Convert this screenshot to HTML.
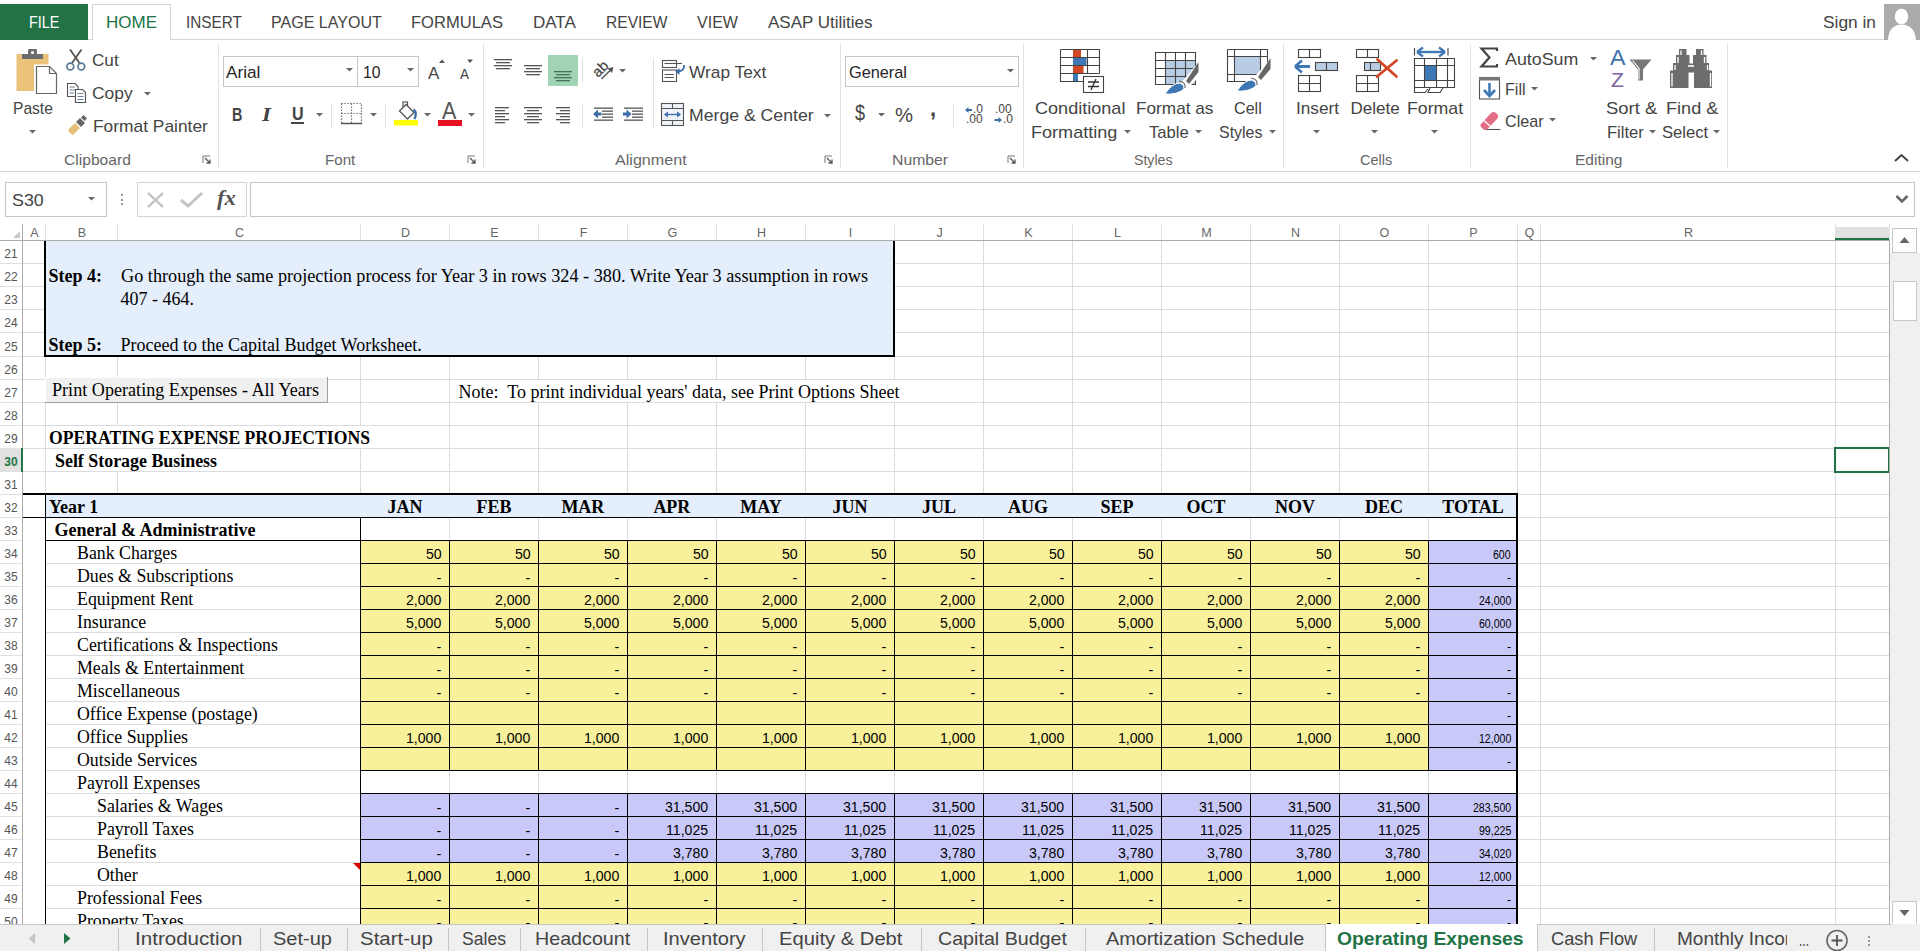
<!DOCTYPE html>
<html><head><meta charset="utf-8"><title>Excel</title>
<style>
html,body{margin:0;padding:0;width:1920px;height:951px;overflow:hidden;background:#fff;}
body{position:relative;font-family:"Liberation Sans",sans-serif;}
body>div{position:absolute;}
.t{white-space:pre;line-height:1;}
</style></head><body>
<div style="left:23px;top:263px;width:1866px;height:1px;background:#DADCDD;"></div>
<div style="left:23px;top:286px;width:1866px;height:1px;background:#DADCDD;"></div>
<div style="left:23px;top:309px;width:1866px;height:1px;background:#DADCDD;"></div>
<div style="left:23px;top:332px;width:1866px;height:1px;background:#DADCDD;"></div>
<div style="left:23px;top:356px;width:1866px;height:1px;background:#DADCDD;"></div>
<div style="left:23px;top:379px;width:1866px;height:1px;background:#DADCDD;"></div>
<div style="left:23px;top:402px;width:1866px;height:1px;background:#DADCDD;"></div>
<div style="left:23px;top:425px;width:1866px;height:1px;background:#DADCDD;"></div>
<div style="left:23px;top:448px;width:1866px;height:1px;background:#DADCDD;"></div>
<div style="left:23px;top:471px;width:1866px;height:1px;background:#DADCDD;"></div>
<div style="left:23px;top:494px;width:1866px;height:1px;background:#DADCDD;"></div>
<div style="left:23px;top:517px;width:1866px;height:1px;background:#DADCDD;"></div>
<div style="left:23px;top:540px;width:1866px;height:1px;background:#DADCDD;"></div>
<div style="left:23px;top:563px;width:1866px;height:1px;background:#DADCDD;"></div>
<div style="left:23px;top:586px;width:1866px;height:1px;background:#DADCDD;"></div>
<div style="left:23px;top:609px;width:1866px;height:1px;background:#DADCDD;"></div>
<div style="left:23px;top:632px;width:1866px;height:1px;background:#DADCDD;"></div>
<div style="left:23px;top:655px;width:1866px;height:1px;background:#DADCDD;"></div>
<div style="left:23px;top:678px;width:1866px;height:1px;background:#DADCDD;"></div>
<div style="left:23px;top:701px;width:1866px;height:1px;background:#DADCDD;"></div>
<div style="left:23px;top:724px;width:1866px;height:1px;background:#DADCDD;"></div>
<div style="left:23px;top:747px;width:1866px;height:1px;background:#DADCDD;"></div>
<div style="left:23px;top:770px;width:1866px;height:1px;background:#DADCDD;"></div>
<div style="left:23px;top:793px;width:1866px;height:1px;background:#DADCDD;"></div>
<div style="left:23px;top:816px;width:1866px;height:1px;background:#DADCDD;"></div>
<div style="left:23px;top:839px;width:1866px;height:1px;background:#DADCDD;"></div>
<div style="left:23px;top:862px;width:1866px;height:1px;background:#DADCDD;"></div>
<div style="left:23px;top:885px;width:1866px;height:1px;background:#DADCDD;"></div>
<div style="left:23px;top:908px;width:1866px;height:1px;background:#DADCDD;"></div>
<div style="left:117px;top:241px;width:1px;height:683px;background:#DADCDD;"></div>
<div style="left:360px;top:241px;width:1px;height:683px;background:#DADCDD;"></div>
<div style="left:449px;top:241px;width:1px;height:683px;background:#DADCDD;"></div>
<div style="left:538px;top:241px;width:1px;height:683px;background:#DADCDD;"></div>
<div style="left:627px;top:241px;width:1px;height:683px;background:#DADCDD;"></div>
<div style="left:716px;top:241px;width:1px;height:683px;background:#DADCDD;"></div>
<div style="left:805px;top:241px;width:1px;height:683px;background:#DADCDD;"></div>
<div style="left:894px;top:241px;width:1px;height:683px;background:#DADCDD;"></div>
<div style="left:983px;top:241px;width:1px;height:683px;background:#DADCDD;"></div>
<div style="left:1072px;top:241px;width:1px;height:683px;background:#DADCDD;"></div>
<div style="left:1161px;top:241px;width:1px;height:683px;background:#DADCDD;"></div>
<div style="left:1250px;top:241px;width:1px;height:683px;background:#DADCDD;"></div>
<div style="left:1339px;top:241px;width:1px;height:683px;background:#DADCDD;"></div>
<div style="left:1428px;top:241px;width:1px;height:683px;background:#DADCDD;"></div>
<div style="left:1517px;top:241px;width:1px;height:683px;background:#DADCDD;"></div>
<div style="left:1540px;top:241px;width:1px;height:683px;background:#DADCDD;"></div>
<div style="left:1835px;top:241px;width:1px;height:683px;background:#DADCDD;"></div>
<div style="left:0px;top:263px;width:22px;height:1px;background:#E1E1E1;"></div>
<div style="left:0px;top:286px;width:22px;height:1px;background:#E1E1E1;"></div>
<div style="left:0px;top:309px;width:22px;height:1px;background:#E1E1E1;"></div>
<div style="left:0px;top:332px;width:22px;height:1px;background:#E1E1E1;"></div>
<div style="left:0px;top:356px;width:22px;height:1px;background:#E1E1E1;"></div>
<div style="left:0px;top:379px;width:22px;height:1px;background:#E1E1E1;"></div>
<div style="left:0px;top:402px;width:22px;height:1px;background:#E1E1E1;"></div>
<div style="left:0px;top:425px;width:22px;height:1px;background:#E1E1E1;"></div>
<div style="left:0px;top:448px;width:22px;height:1px;background:#E1E1E1;"></div>
<div style="left:0px;top:471px;width:22px;height:1px;background:#E1E1E1;"></div>
<div style="left:0px;top:494px;width:22px;height:1px;background:#E1E1E1;"></div>
<div style="left:0px;top:517px;width:22px;height:1px;background:#E1E1E1;"></div>
<div style="left:0px;top:540px;width:22px;height:1px;background:#E1E1E1;"></div>
<div style="left:0px;top:563px;width:22px;height:1px;background:#E1E1E1;"></div>
<div style="left:0px;top:586px;width:22px;height:1px;background:#E1E1E1;"></div>
<div style="left:0px;top:609px;width:22px;height:1px;background:#E1E1E1;"></div>
<div style="left:0px;top:632px;width:22px;height:1px;background:#E1E1E1;"></div>
<div style="left:0px;top:655px;width:22px;height:1px;background:#E1E1E1;"></div>
<div style="left:0px;top:678px;width:22px;height:1px;background:#E1E1E1;"></div>
<div style="left:0px;top:701px;width:22px;height:1px;background:#E1E1E1;"></div>
<div style="left:0px;top:724px;width:22px;height:1px;background:#E1E1E1;"></div>
<div style="left:0px;top:747px;width:22px;height:1px;background:#E1E1E1;"></div>
<div style="left:0px;top:770px;width:22px;height:1px;background:#E1E1E1;"></div>
<div style="left:0px;top:793px;width:22px;height:1px;background:#E1E1E1;"></div>
<div style="left:0px;top:816px;width:22px;height:1px;background:#E1E1E1;"></div>
<div style="left:0px;top:839px;width:22px;height:1px;background:#E1E1E1;"></div>
<div style="left:0px;top:862px;width:22px;height:1px;background:#E1E1E1;"></div>
<div style="left:0px;top:885px;width:22px;height:1px;background:#E1E1E1;"></div>
<div style="left:0px;top:908px;width:22px;height:1px;background:#E1E1E1;"></div>
<div style="left:46px;top:241px;width:847px;height:114px;background:#E5EEFB;"></div>
<div style="left:44px;top:241px;width:2px;height:116px;background:#000;"></div>
<div style="left:893px;top:241px;width:2px;height:116px;background:#000;"></div>
<div style="left:44px;top:355px;width:851px;height:2px;background:#000;"></div>
<div style="left:450px;top:380px;width:445px;height:22px;background:#fff;"></div>
<div style="left:46px;top:426px;width:330px;height:22px;background:#fff;"></div>
<div style="left:46px;top:449px;width:180px;height:22px;background:#fff;"></div>
<div style="left:23px;top:493px;width:1495px;height:2px;background:#000;"></div>
<div style="left:46px;top:495px;width:1470px;height:22px;background:#E5EEFB;"></div>
<div style="left:23px;top:517px;width:1495px;height:1px;background:#000;"></div>
<div style="left:45px;top:495px;width:1px;height:429px;background:#000;"></div>
<div style="left:1516px;top:493px;width:2px;height:431px;background:#000;"></div>
<div style="left:23px;top:518px;width:22px;height:406px;background:#fff;"></div>
<div style="left:46px;top:518px;width:314px;height:406px;background:#fff;"></div>
<div style="left:46px;top:540px;width:314px;height:1px;background:#DADCDD;"></div>
<div style="left:46px;top:563px;width:314px;height:1px;background:#DADCDD;"></div>
<div style="left:46px;top:586px;width:314px;height:1px;background:#DADCDD;"></div>
<div style="left:46px;top:609px;width:314px;height:1px;background:#DADCDD;"></div>
<div style="left:46px;top:632px;width:314px;height:1px;background:#DADCDD;"></div>
<div style="left:46px;top:655px;width:314px;height:1px;background:#DADCDD;"></div>
<div style="left:46px;top:678px;width:314px;height:1px;background:#DADCDD;"></div>
<div style="left:46px;top:701px;width:314px;height:1px;background:#DADCDD;"></div>
<div style="left:46px;top:724px;width:314px;height:1px;background:#DADCDD;"></div>
<div style="left:46px;top:747px;width:314px;height:1px;background:#DADCDD;"></div>
<div style="left:46px;top:770px;width:314px;height:1px;background:#DADCDD;"></div>
<div style="left:46px;top:793px;width:314px;height:1px;background:#DADCDD;"></div>
<div style="left:46px;top:816px;width:314px;height:1px;background:#DADCDD;"></div>
<div style="left:46px;top:839px;width:314px;height:1px;background:#DADCDD;"></div>
<div style="left:46px;top:862px;width:314px;height:1px;background:#DADCDD;"></div>
<div style="left:46px;top:885px;width:314px;height:1px;background:#DADCDD;"></div>
<div style="left:46px;top:908px;width:314px;height:1px;background:#DADCDD;"></div>
<div style="left:45px;top:540px;width:1473px;height:1px;background:#000;"></div>
<div style="left:360px;top:518px;width:1px;height:406px;background:#000;"></div>
<div style="left:361px;top:518px;width:1155px;height:22px;background:#fff;"></div>
<div style="left:449px;top:518px;width:1px;height:22px;background:#DADCDD;"></div>
<div style="left:538px;top:518px;width:1px;height:22px;background:#DADCDD;"></div>
<div style="left:627px;top:518px;width:1px;height:22px;background:#DADCDD;"></div>
<div style="left:716px;top:518px;width:1px;height:22px;background:#DADCDD;"></div>
<div style="left:805px;top:518px;width:1px;height:22px;background:#DADCDD;"></div>
<div style="left:894px;top:518px;width:1px;height:22px;background:#DADCDD;"></div>
<div style="left:983px;top:518px;width:1px;height:22px;background:#DADCDD;"></div>
<div style="left:1072px;top:518px;width:1px;height:22px;background:#DADCDD;"></div>
<div style="left:1161px;top:518px;width:1px;height:22px;background:#DADCDD;"></div>
<div style="left:1250px;top:518px;width:1px;height:22px;background:#DADCDD;"></div>
<div style="left:1339px;top:518px;width:1px;height:22px;background:#DADCDD;"></div>
<div style="left:1428px;top:518px;width:1px;height:22px;background:#DADCDD;"></div>
<div style="left:361px;top:541px;width:1067px;height:22px;background:#F8F09A;"></div>
<div style="left:1429px;top:541px;width:87px;height:22px;background:#C9C9F9;"></div>
<div style="left:449px;top:541px;width:1px;height:22px;background:#000;"></div>
<div style="left:538px;top:541px;width:1px;height:22px;background:#000;"></div>
<div style="left:627px;top:541px;width:1px;height:22px;background:#000;"></div>
<div style="left:716px;top:541px;width:1px;height:22px;background:#000;"></div>
<div style="left:805px;top:541px;width:1px;height:22px;background:#000;"></div>
<div style="left:894px;top:541px;width:1px;height:22px;background:#000;"></div>
<div style="left:983px;top:541px;width:1px;height:22px;background:#000;"></div>
<div style="left:1072px;top:541px;width:1px;height:22px;background:#000;"></div>
<div style="left:1161px;top:541px;width:1px;height:22px;background:#000;"></div>
<div style="left:1250px;top:541px;width:1px;height:22px;background:#000;"></div>
<div style="left:1339px;top:541px;width:1px;height:22px;background:#000;"></div>
<div style="left:1428px;top:541px;width:1px;height:22px;background:#000;"></div>
<div style="left:361px;top:564px;width:1067px;height:22px;background:#F8F09A;"></div>
<div style="left:1429px;top:564px;width:87px;height:22px;background:#C9C9F9;"></div>
<div style="left:449px;top:564px;width:1px;height:22px;background:#000;"></div>
<div style="left:538px;top:564px;width:1px;height:22px;background:#000;"></div>
<div style="left:627px;top:564px;width:1px;height:22px;background:#000;"></div>
<div style="left:716px;top:564px;width:1px;height:22px;background:#000;"></div>
<div style="left:805px;top:564px;width:1px;height:22px;background:#000;"></div>
<div style="left:894px;top:564px;width:1px;height:22px;background:#000;"></div>
<div style="left:983px;top:564px;width:1px;height:22px;background:#000;"></div>
<div style="left:1072px;top:564px;width:1px;height:22px;background:#000;"></div>
<div style="left:1161px;top:564px;width:1px;height:22px;background:#000;"></div>
<div style="left:1250px;top:564px;width:1px;height:22px;background:#000;"></div>
<div style="left:1339px;top:564px;width:1px;height:22px;background:#000;"></div>
<div style="left:1428px;top:564px;width:1px;height:22px;background:#000;"></div>
<div style="left:361px;top:587px;width:1067px;height:22px;background:#F8F09A;"></div>
<div style="left:1429px;top:587px;width:87px;height:22px;background:#C9C9F9;"></div>
<div style="left:449px;top:587px;width:1px;height:22px;background:#000;"></div>
<div style="left:538px;top:587px;width:1px;height:22px;background:#000;"></div>
<div style="left:627px;top:587px;width:1px;height:22px;background:#000;"></div>
<div style="left:716px;top:587px;width:1px;height:22px;background:#000;"></div>
<div style="left:805px;top:587px;width:1px;height:22px;background:#000;"></div>
<div style="left:894px;top:587px;width:1px;height:22px;background:#000;"></div>
<div style="left:983px;top:587px;width:1px;height:22px;background:#000;"></div>
<div style="left:1072px;top:587px;width:1px;height:22px;background:#000;"></div>
<div style="left:1161px;top:587px;width:1px;height:22px;background:#000;"></div>
<div style="left:1250px;top:587px;width:1px;height:22px;background:#000;"></div>
<div style="left:1339px;top:587px;width:1px;height:22px;background:#000;"></div>
<div style="left:1428px;top:587px;width:1px;height:22px;background:#000;"></div>
<div style="left:361px;top:610px;width:1067px;height:22px;background:#F8F09A;"></div>
<div style="left:1429px;top:610px;width:87px;height:22px;background:#C9C9F9;"></div>
<div style="left:449px;top:610px;width:1px;height:22px;background:#000;"></div>
<div style="left:538px;top:610px;width:1px;height:22px;background:#000;"></div>
<div style="left:627px;top:610px;width:1px;height:22px;background:#000;"></div>
<div style="left:716px;top:610px;width:1px;height:22px;background:#000;"></div>
<div style="left:805px;top:610px;width:1px;height:22px;background:#000;"></div>
<div style="left:894px;top:610px;width:1px;height:22px;background:#000;"></div>
<div style="left:983px;top:610px;width:1px;height:22px;background:#000;"></div>
<div style="left:1072px;top:610px;width:1px;height:22px;background:#000;"></div>
<div style="left:1161px;top:610px;width:1px;height:22px;background:#000;"></div>
<div style="left:1250px;top:610px;width:1px;height:22px;background:#000;"></div>
<div style="left:1339px;top:610px;width:1px;height:22px;background:#000;"></div>
<div style="left:1428px;top:610px;width:1px;height:22px;background:#000;"></div>
<div style="left:361px;top:633px;width:1067px;height:22px;background:#F8F09A;"></div>
<div style="left:1429px;top:633px;width:87px;height:22px;background:#C9C9F9;"></div>
<div style="left:449px;top:633px;width:1px;height:22px;background:#000;"></div>
<div style="left:538px;top:633px;width:1px;height:22px;background:#000;"></div>
<div style="left:627px;top:633px;width:1px;height:22px;background:#000;"></div>
<div style="left:716px;top:633px;width:1px;height:22px;background:#000;"></div>
<div style="left:805px;top:633px;width:1px;height:22px;background:#000;"></div>
<div style="left:894px;top:633px;width:1px;height:22px;background:#000;"></div>
<div style="left:983px;top:633px;width:1px;height:22px;background:#000;"></div>
<div style="left:1072px;top:633px;width:1px;height:22px;background:#000;"></div>
<div style="left:1161px;top:633px;width:1px;height:22px;background:#000;"></div>
<div style="left:1250px;top:633px;width:1px;height:22px;background:#000;"></div>
<div style="left:1339px;top:633px;width:1px;height:22px;background:#000;"></div>
<div style="left:1428px;top:633px;width:1px;height:22px;background:#000;"></div>
<div style="left:361px;top:656px;width:1067px;height:22px;background:#F8F09A;"></div>
<div style="left:1429px;top:656px;width:87px;height:22px;background:#C9C9F9;"></div>
<div style="left:449px;top:656px;width:1px;height:22px;background:#000;"></div>
<div style="left:538px;top:656px;width:1px;height:22px;background:#000;"></div>
<div style="left:627px;top:656px;width:1px;height:22px;background:#000;"></div>
<div style="left:716px;top:656px;width:1px;height:22px;background:#000;"></div>
<div style="left:805px;top:656px;width:1px;height:22px;background:#000;"></div>
<div style="left:894px;top:656px;width:1px;height:22px;background:#000;"></div>
<div style="left:983px;top:656px;width:1px;height:22px;background:#000;"></div>
<div style="left:1072px;top:656px;width:1px;height:22px;background:#000;"></div>
<div style="left:1161px;top:656px;width:1px;height:22px;background:#000;"></div>
<div style="left:1250px;top:656px;width:1px;height:22px;background:#000;"></div>
<div style="left:1339px;top:656px;width:1px;height:22px;background:#000;"></div>
<div style="left:1428px;top:656px;width:1px;height:22px;background:#000;"></div>
<div style="left:361px;top:679px;width:1067px;height:22px;background:#F8F09A;"></div>
<div style="left:1429px;top:679px;width:87px;height:22px;background:#C9C9F9;"></div>
<div style="left:449px;top:679px;width:1px;height:22px;background:#000;"></div>
<div style="left:538px;top:679px;width:1px;height:22px;background:#000;"></div>
<div style="left:627px;top:679px;width:1px;height:22px;background:#000;"></div>
<div style="left:716px;top:679px;width:1px;height:22px;background:#000;"></div>
<div style="left:805px;top:679px;width:1px;height:22px;background:#000;"></div>
<div style="left:894px;top:679px;width:1px;height:22px;background:#000;"></div>
<div style="left:983px;top:679px;width:1px;height:22px;background:#000;"></div>
<div style="left:1072px;top:679px;width:1px;height:22px;background:#000;"></div>
<div style="left:1161px;top:679px;width:1px;height:22px;background:#000;"></div>
<div style="left:1250px;top:679px;width:1px;height:22px;background:#000;"></div>
<div style="left:1339px;top:679px;width:1px;height:22px;background:#000;"></div>
<div style="left:1428px;top:679px;width:1px;height:22px;background:#000;"></div>
<div style="left:361px;top:702px;width:1067px;height:22px;background:#F8F09A;"></div>
<div style="left:1429px;top:702px;width:87px;height:22px;background:#C9C9F9;"></div>
<div style="left:449px;top:702px;width:1px;height:22px;background:#000;"></div>
<div style="left:538px;top:702px;width:1px;height:22px;background:#000;"></div>
<div style="left:627px;top:702px;width:1px;height:22px;background:#000;"></div>
<div style="left:716px;top:702px;width:1px;height:22px;background:#000;"></div>
<div style="left:805px;top:702px;width:1px;height:22px;background:#000;"></div>
<div style="left:894px;top:702px;width:1px;height:22px;background:#000;"></div>
<div style="left:983px;top:702px;width:1px;height:22px;background:#000;"></div>
<div style="left:1072px;top:702px;width:1px;height:22px;background:#000;"></div>
<div style="left:1161px;top:702px;width:1px;height:22px;background:#000;"></div>
<div style="left:1250px;top:702px;width:1px;height:22px;background:#000;"></div>
<div style="left:1339px;top:702px;width:1px;height:22px;background:#000;"></div>
<div style="left:1428px;top:702px;width:1px;height:22px;background:#000;"></div>
<div style="left:361px;top:725px;width:1067px;height:22px;background:#F8F09A;"></div>
<div style="left:1429px;top:725px;width:87px;height:22px;background:#C9C9F9;"></div>
<div style="left:449px;top:725px;width:1px;height:22px;background:#000;"></div>
<div style="left:538px;top:725px;width:1px;height:22px;background:#000;"></div>
<div style="left:627px;top:725px;width:1px;height:22px;background:#000;"></div>
<div style="left:716px;top:725px;width:1px;height:22px;background:#000;"></div>
<div style="left:805px;top:725px;width:1px;height:22px;background:#000;"></div>
<div style="left:894px;top:725px;width:1px;height:22px;background:#000;"></div>
<div style="left:983px;top:725px;width:1px;height:22px;background:#000;"></div>
<div style="left:1072px;top:725px;width:1px;height:22px;background:#000;"></div>
<div style="left:1161px;top:725px;width:1px;height:22px;background:#000;"></div>
<div style="left:1250px;top:725px;width:1px;height:22px;background:#000;"></div>
<div style="left:1339px;top:725px;width:1px;height:22px;background:#000;"></div>
<div style="left:1428px;top:725px;width:1px;height:22px;background:#000;"></div>
<div style="left:361px;top:748px;width:1067px;height:22px;background:#F8F09A;"></div>
<div style="left:1429px;top:748px;width:87px;height:22px;background:#C9C9F9;"></div>
<div style="left:449px;top:748px;width:1px;height:22px;background:#000;"></div>
<div style="left:538px;top:748px;width:1px;height:22px;background:#000;"></div>
<div style="left:627px;top:748px;width:1px;height:22px;background:#000;"></div>
<div style="left:716px;top:748px;width:1px;height:22px;background:#000;"></div>
<div style="left:805px;top:748px;width:1px;height:22px;background:#000;"></div>
<div style="left:894px;top:748px;width:1px;height:22px;background:#000;"></div>
<div style="left:983px;top:748px;width:1px;height:22px;background:#000;"></div>
<div style="left:1072px;top:748px;width:1px;height:22px;background:#000;"></div>
<div style="left:1161px;top:748px;width:1px;height:22px;background:#000;"></div>
<div style="left:1250px;top:748px;width:1px;height:22px;background:#000;"></div>
<div style="left:1339px;top:748px;width:1px;height:22px;background:#000;"></div>
<div style="left:1428px;top:748px;width:1px;height:22px;background:#000;"></div>
<div style="left:361px;top:771px;width:1155px;height:22px;background:#fff;"></div>
<div style="left:449px;top:771px;width:1px;height:22px;background:#DADCDD;"></div>
<div style="left:538px;top:771px;width:1px;height:22px;background:#DADCDD;"></div>
<div style="left:627px;top:771px;width:1px;height:22px;background:#DADCDD;"></div>
<div style="left:716px;top:771px;width:1px;height:22px;background:#DADCDD;"></div>
<div style="left:805px;top:771px;width:1px;height:22px;background:#DADCDD;"></div>
<div style="left:894px;top:771px;width:1px;height:22px;background:#DADCDD;"></div>
<div style="left:983px;top:771px;width:1px;height:22px;background:#DADCDD;"></div>
<div style="left:1072px;top:771px;width:1px;height:22px;background:#DADCDD;"></div>
<div style="left:1161px;top:771px;width:1px;height:22px;background:#DADCDD;"></div>
<div style="left:1250px;top:771px;width:1px;height:22px;background:#DADCDD;"></div>
<div style="left:1339px;top:771px;width:1px;height:22px;background:#DADCDD;"></div>
<div style="left:1428px;top:771px;width:1px;height:22px;background:#DADCDD;"></div>
<div style="left:361px;top:794px;width:1155px;height:22px;background:#C9C9F9;"></div>
<div style="left:449px;top:794px;width:1px;height:22px;background:#000;"></div>
<div style="left:538px;top:794px;width:1px;height:22px;background:#000;"></div>
<div style="left:627px;top:794px;width:1px;height:22px;background:#000;"></div>
<div style="left:716px;top:794px;width:1px;height:22px;background:#000;"></div>
<div style="left:805px;top:794px;width:1px;height:22px;background:#000;"></div>
<div style="left:894px;top:794px;width:1px;height:22px;background:#000;"></div>
<div style="left:983px;top:794px;width:1px;height:22px;background:#000;"></div>
<div style="left:1072px;top:794px;width:1px;height:22px;background:#000;"></div>
<div style="left:1161px;top:794px;width:1px;height:22px;background:#000;"></div>
<div style="left:1250px;top:794px;width:1px;height:22px;background:#000;"></div>
<div style="left:1339px;top:794px;width:1px;height:22px;background:#000;"></div>
<div style="left:1428px;top:794px;width:1px;height:22px;background:#000;"></div>
<div style="left:361px;top:817px;width:1155px;height:22px;background:#C9C9F9;"></div>
<div style="left:449px;top:817px;width:1px;height:22px;background:#000;"></div>
<div style="left:538px;top:817px;width:1px;height:22px;background:#000;"></div>
<div style="left:627px;top:817px;width:1px;height:22px;background:#000;"></div>
<div style="left:716px;top:817px;width:1px;height:22px;background:#000;"></div>
<div style="left:805px;top:817px;width:1px;height:22px;background:#000;"></div>
<div style="left:894px;top:817px;width:1px;height:22px;background:#000;"></div>
<div style="left:983px;top:817px;width:1px;height:22px;background:#000;"></div>
<div style="left:1072px;top:817px;width:1px;height:22px;background:#000;"></div>
<div style="left:1161px;top:817px;width:1px;height:22px;background:#000;"></div>
<div style="left:1250px;top:817px;width:1px;height:22px;background:#000;"></div>
<div style="left:1339px;top:817px;width:1px;height:22px;background:#000;"></div>
<div style="left:1428px;top:817px;width:1px;height:22px;background:#000;"></div>
<div style="left:361px;top:840px;width:1155px;height:22px;background:#C9C9F9;"></div>
<div style="left:449px;top:840px;width:1px;height:22px;background:#000;"></div>
<div style="left:538px;top:840px;width:1px;height:22px;background:#000;"></div>
<div style="left:627px;top:840px;width:1px;height:22px;background:#000;"></div>
<div style="left:716px;top:840px;width:1px;height:22px;background:#000;"></div>
<div style="left:805px;top:840px;width:1px;height:22px;background:#000;"></div>
<div style="left:894px;top:840px;width:1px;height:22px;background:#000;"></div>
<div style="left:983px;top:840px;width:1px;height:22px;background:#000;"></div>
<div style="left:1072px;top:840px;width:1px;height:22px;background:#000;"></div>
<div style="left:1161px;top:840px;width:1px;height:22px;background:#000;"></div>
<div style="left:1250px;top:840px;width:1px;height:22px;background:#000;"></div>
<div style="left:1339px;top:840px;width:1px;height:22px;background:#000;"></div>
<div style="left:1428px;top:840px;width:1px;height:22px;background:#000;"></div>
<div style="left:361px;top:863px;width:1067px;height:22px;background:#F8F09A;"></div>
<div style="left:1429px;top:863px;width:87px;height:22px;background:#C9C9F9;"></div>
<div style="left:449px;top:863px;width:1px;height:22px;background:#000;"></div>
<div style="left:538px;top:863px;width:1px;height:22px;background:#000;"></div>
<div style="left:627px;top:863px;width:1px;height:22px;background:#000;"></div>
<div style="left:716px;top:863px;width:1px;height:22px;background:#000;"></div>
<div style="left:805px;top:863px;width:1px;height:22px;background:#000;"></div>
<div style="left:894px;top:863px;width:1px;height:22px;background:#000;"></div>
<div style="left:983px;top:863px;width:1px;height:22px;background:#000;"></div>
<div style="left:1072px;top:863px;width:1px;height:22px;background:#000;"></div>
<div style="left:1161px;top:863px;width:1px;height:22px;background:#000;"></div>
<div style="left:1250px;top:863px;width:1px;height:22px;background:#000;"></div>
<div style="left:1339px;top:863px;width:1px;height:22px;background:#000;"></div>
<div style="left:1428px;top:863px;width:1px;height:22px;background:#000;"></div>
<div style="left:361px;top:886px;width:1067px;height:22px;background:#F8F09A;"></div>
<div style="left:1429px;top:886px;width:87px;height:22px;background:#C9C9F9;"></div>
<div style="left:449px;top:886px;width:1px;height:22px;background:#000;"></div>
<div style="left:538px;top:886px;width:1px;height:22px;background:#000;"></div>
<div style="left:627px;top:886px;width:1px;height:22px;background:#000;"></div>
<div style="left:716px;top:886px;width:1px;height:22px;background:#000;"></div>
<div style="left:805px;top:886px;width:1px;height:22px;background:#000;"></div>
<div style="left:894px;top:886px;width:1px;height:22px;background:#000;"></div>
<div style="left:983px;top:886px;width:1px;height:22px;background:#000;"></div>
<div style="left:1072px;top:886px;width:1px;height:22px;background:#000;"></div>
<div style="left:1161px;top:886px;width:1px;height:22px;background:#000;"></div>
<div style="left:1250px;top:886px;width:1px;height:22px;background:#000;"></div>
<div style="left:1339px;top:886px;width:1px;height:22px;background:#000;"></div>
<div style="left:1428px;top:886px;width:1px;height:22px;background:#000;"></div>
<div style="left:361px;top:909px;width:1067px;height:15px;background:#F8F09A;"></div>
<div style="left:1429px;top:909px;width:87px;height:15px;background:#C9C9F9;"></div>
<div style="left:449px;top:909px;width:1px;height:15px;background:#000;"></div>
<div style="left:538px;top:909px;width:1px;height:15px;background:#000;"></div>
<div style="left:627px;top:909px;width:1px;height:15px;background:#000;"></div>
<div style="left:716px;top:909px;width:1px;height:15px;background:#000;"></div>
<div style="left:805px;top:909px;width:1px;height:15px;background:#000;"></div>
<div style="left:894px;top:909px;width:1px;height:15px;background:#000;"></div>
<div style="left:983px;top:909px;width:1px;height:15px;background:#000;"></div>
<div style="left:1072px;top:909px;width:1px;height:15px;background:#000;"></div>
<div style="left:1161px;top:909px;width:1px;height:15px;background:#000;"></div>
<div style="left:1250px;top:909px;width:1px;height:15px;background:#000;"></div>
<div style="left:1339px;top:909px;width:1px;height:15px;background:#000;"></div>
<div style="left:1428px;top:909px;width:1px;height:15px;background:#000;"></div>
<div style="left:360px;top:540px;width:1158px;height:1px;background:#000;"></div>
<div style="left:360px;top:563px;width:1158px;height:1px;background:#000;"></div>
<div style="left:360px;top:586px;width:1158px;height:1px;background:#000;"></div>
<div style="left:360px;top:609px;width:1158px;height:1px;background:#000;"></div>
<div style="left:360px;top:632px;width:1158px;height:1px;background:#000;"></div>
<div style="left:360px;top:655px;width:1158px;height:1px;background:#000;"></div>
<div style="left:360px;top:678px;width:1158px;height:1px;background:#000;"></div>
<div style="left:360px;top:701px;width:1158px;height:1px;background:#000;"></div>
<div style="left:360px;top:724px;width:1158px;height:1px;background:#000;"></div>
<div style="left:360px;top:747px;width:1158px;height:1px;background:#000;"></div>
<div style="left:360px;top:770px;width:1158px;height:1px;background:#000;"></div>
<div style="left:360px;top:793px;width:1158px;height:1px;background:#000;"></div>
<div style="left:360px;top:816px;width:1158px;height:1px;background:#000;"></div>
<div style="left:360px;top:839px;width:1158px;height:1px;background:#000;"></div>
<div style="left:360px;top:862px;width:1158px;height:1px;background:#000;"></div>
<div style="left:360px;top:885px;width:1158px;height:1px;background:#000;"></div>
<div style="left:360px;top:908px;width:1158px;height:1px;background:#000;"></div>
<div style="left:45px;top:357px;width:1px;height:136px;background:#DADCDD;"></div>
<div style="left:0px;top:240px;width:1890px;height:1px;background:#ABABAB;"></div>
<div style="left:45px;top:224px;width:1px;height:16px;background:#E1E1E1;"></div>
<div style="left:117px;top:224px;width:1px;height:16px;background:#E1E1E1;"></div>
<div style="left:360px;top:224px;width:1px;height:16px;background:#E1E1E1;"></div>
<div style="left:449px;top:224px;width:1px;height:16px;background:#E1E1E1;"></div>
<div style="left:538px;top:224px;width:1px;height:16px;background:#E1E1E1;"></div>
<div style="left:627px;top:224px;width:1px;height:16px;background:#E1E1E1;"></div>
<div style="left:716px;top:224px;width:1px;height:16px;background:#E1E1E1;"></div>
<div style="left:805px;top:224px;width:1px;height:16px;background:#E1E1E1;"></div>
<div style="left:894px;top:224px;width:1px;height:16px;background:#E1E1E1;"></div>
<div style="left:983px;top:224px;width:1px;height:16px;background:#E1E1E1;"></div>
<div style="left:1072px;top:224px;width:1px;height:16px;background:#E1E1E1;"></div>
<div style="left:1161px;top:224px;width:1px;height:16px;background:#E1E1E1;"></div>
<div style="left:1250px;top:224px;width:1px;height:16px;background:#E1E1E1;"></div>
<div style="left:1339px;top:224px;width:1px;height:16px;background:#E1E1E1;"></div>
<div style="left:1428px;top:224px;width:1px;height:16px;background:#E1E1E1;"></div>
<div style="left:1517px;top:224px;width:1px;height:16px;background:#E1E1E1;"></div>
<div style="left:1540px;top:224px;width:1px;height:16px;background:#E1E1E1;"></div>
<div style="left:1835px;top:224px;width:1px;height:16px;background:#E1E1E1;"></div>
<div style="left:1889px;top:224px;width:1px;height:16px;background:#E1E1E1;"></div>
<div style="left:22px;top:224px;width:1px;height:700px;background:#ABABAB;"></div>
<div style="left:1835px;top:227px;width:54px;height:13px;background:#E1E1E1;"></div>
<div style="left:1835px;top:238px;width:54px;height:2px;background:#217346;"></div>
<svg style="position:absolute;left:12px;top:230px;" width="9" height="9" viewBox="0 0 9 9"><path d="M8 1 L8 8 L1 8 Z" fill="#C8C8C8"/></svg>
<div class="t" style="left:30.31px;top:227.38px;font-family:'Liberation Sans',sans-serif;font-size:12.5px;font-weight:400;color:#666;">A</div>
<div class="t" style="left:77.81px;top:227.38px;font-family:'Liberation Sans',sans-serif;font-size:12.5px;font-weight:400;color:#666;">B</div>
<div class="t" style="left:235.00px;top:227.38px;font-family:'Liberation Sans',sans-serif;font-size:12.5px;font-weight:400;color:#666;">C</div>
<div class="t" style="left:401.00px;top:227.38px;font-family:'Liberation Sans',sans-serif;font-size:12.5px;font-weight:400;color:#666;">D</div>
<div class="t" style="left:490.31px;top:227.38px;font-family:'Liberation Sans',sans-serif;font-size:12.5px;font-weight:400;color:#666;">E</div>
<div class="t" style="left:579.69px;top:227.38px;font-family:'Liberation Sans',sans-serif;font-size:12.5px;font-weight:400;color:#666;">F</div>
<div class="t" style="left:667.62px;top:227.38px;font-family:'Liberation Sans',sans-serif;font-size:12.5px;font-weight:400;color:#666;">G</div>
<div class="t" style="left:757.00px;top:227.38px;font-family:'Liberation Sans',sans-serif;font-size:12.5px;font-weight:400;color:#666;">H</div>
<div class="t" style="left:848.75px;top:227.38px;font-family:'Liberation Sans',sans-serif;font-size:12.5px;font-weight:400;color:#666;">I</div>
<div class="t" style="left:936.38px;top:227.38px;font-family:'Liberation Sans',sans-serif;font-size:12.5px;font-weight:400;color:#666;">J</div>
<div class="t" style="left:1024.31px;top:227.38px;font-family:'Liberation Sans',sans-serif;font-size:12.5px;font-weight:400;color:#666;">K</div>
<div class="t" style="left:1114.00px;top:227.38px;font-family:'Liberation Sans',sans-serif;font-size:12.5px;font-weight:400;color:#666;">L</div>
<div class="t" style="left:1201.31px;top:227.38px;font-family:'Liberation Sans',sans-serif;font-size:12.5px;font-weight:400;color:#666;">M</div>
<div class="t" style="left:1291.00px;top:227.38px;font-family:'Liberation Sans',sans-serif;font-size:12.5px;font-weight:400;color:#666;">N</div>
<div class="t" style="left:1379.62px;top:227.38px;font-family:'Liberation Sans',sans-serif;font-size:12.5px;font-weight:400;color:#666;">O</div>
<div class="t" style="left:1469.31px;top:227.38px;font-family:'Liberation Sans',sans-serif;font-size:12.5px;font-weight:400;color:#666;">P</div>
<div class="t" style="left:1524.62px;top:227.38px;font-family:'Liberation Sans',sans-serif;font-size:12.5px;font-weight:400;color:#666;">Q</div>
<div class="t" style="left:1684.00px;top:227.38px;font-family:'Liberation Sans',sans-serif;font-size:12.5px;font-weight:400;color:#666;">R</div>
<div style="left:0px;top:449px;width:22px;height:22px;background:#E1E1E1;"></div>
<div style="left:21px;top:448px;width:2px;height:24px;background:#217346;"></div>
<div class="t" style="left:4.31px;top:247.80px;font-family:'Liberation Sans',sans-serif;font-size:12px;font-weight:400;color:#555;">21</div>
<div class="t" style="left:4.31px;top:270.80px;font-family:'Liberation Sans',sans-serif;font-size:12px;font-weight:400;color:#555;">22</div>
<div class="t" style="left:4.31px;top:293.80px;font-family:'Liberation Sans',sans-serif;font-size:12px;font-weight:400;color:#555;">23</div>
<div class="t" style="left:4.31px;top:316.80px;font-family:'Liberation Sans',sans-serif;font-size:12px;font-weight:400;color:#555;">24</div>
<div class="t" style="left:4.31px;top:340.80px;font-family:'Liberation Sans',sans-serif;font-size:12px;font-weight:400;color:#555;">25</div>
<div class="t" style="left:4.31px;top:363.80px;font-family:'Liberation Sans',sans-serif;font-size:12px;font-weight:400;color:#555;">26</div>
<div class="t" style="left:4.31px;top:386.80px;font-family:'Liberation Sans',sans-serif;font-size:12px;font-weight:400;color:#555;">27</div>
<div class="t" style="left:4.31px;top:409.80px;font-family:'Liberation Sans',sans-serif;font-size:12px;font-weight:400;color:#555;">28</div>
<div class="t" style="left:4.31px;top:432.80px;font-family:'Liberation Sans',sans-serif;font-size:12px;font-weight:400;color:#555;">29</div>
<div class="t" style="left:4.31px;top:455.80px;font-family:'Liberation Sans',sans-serif;font-size:12px;font-weight:700;color:#217346;">30</div>
<div class="t" style="left:4.31px;top:478.80px;font-family:'Liberation Sans',sans-serif;font-size:12px;font-weight:400;color:#555;">31</div>
<div class="t" style="left:4.31px;top:501.80px;font-family:'Liberation Sans',sans-serif;font-size:12px;font-weight:400;color:#555;">32</div>
<div class="t" style="left:4.31px;top:524.80px;font-family:'Liberation Sans',sans-serif;font-size:12px;font-weight:400;color:#555;">33</div>
<div class="t" style="left:4.31px;top:547.80px;font-family:'Liberation Sans',sans-serif;font-size:12px;font-weight:400;color:#555;">34</div>
<div class="t" style="left:4.31px;top:570.80px;font-family:'Liberation Sans',sans-serif;font-size:12px;font-weight:400;color:#555;">35</div>
<div class="t" style="left:4.31px;top:593.80px;font-family:'Liberation Sans',sans-serif;font-size:12px;font-weight:400;color:#555;">36</div>
<div class="t" style="left:4.31px;top:616.80px;font-family:'Liberation Sans',sans-serif;font-size:12px;font-weight:400;color:#555;">37</div>
<div class="t" style="left:4.31px;top:639.80px;font-family:'Liberation Sans',sans-serif;font-size:12px;font-weight:400;color:#555;">38</div>
<div class="t" style="left:4.31px;top:662.80px;font-family:'Liberation Sans',sans-serif;font-size:12px;font-weight:400;color:#555;">39</div>
<div class="t" style="left:4.31px;top:685.80px;font-family:'Liberation Sans',sans-serif;font-size:12px;font-weight:400;color:#555;">40</div>
<div class="t" style="left:4.31px;top:708.80px;font-family:'Liberation Sans',sans-serif;font-size:12px;font-weight:400;color:#555;">41</div>
<div class="t" style="left:4.31px;top:731.80px;font-family:'Liberation Sans',sans-serif;font-size:12px;font-weight:400;color:#555;">42</div>
<div class="t" style="left:4.31px;top:754.80px;font-family:'Liberation Sans',sans-serif;font-size:12px;font-weight:400;color:#555;">43</div>
<div class="t" style="left:4.31px;top:777.80px;font-family:'Liberation Sans',sans-serif;font-size:12px;font-weight:400;color:#555;">44</div>
<div class="t" style="left:4.31px;top:800.80px;font-family:'Liberation Sans',sans-serif;font-size:12px;font-weight:400;color:#555;">45</div>
<div class="t" style="left:4.31px;top:823.80px;font-family:'Liberation Sans',sans-serif;font-size:12px;font-weight:400;color:#555;">46</div>
<div class="t" style="left:4.31px;top:846.80px;font-family:'Liberation Sans',sans-serif;font-size:12px;font-weight:400;color:#555;">47</div>
<div class="t" style="left:4.31px;top:869.80px;font-family:'Liberation Sans',sans-serif;font-size:12px;font-weight:400;color:#555;">48</div>
<div class="t" style="left:4.31px;top:892.80px;font-family:'Liberation Sans',sans-serif;font-size:12px;font-weight:400;color:#555;">49</div>
<div class="t" style="left:4.31px;top:915.80px;font-family:'Liberation Sans',sans-serif;font-size:12px;font-weight:400;color:#555;">50</div>
<div class="t" style="left:48.50px;top:267.06px;font-family:'Liberation Serif',serif;font-size:18px;font-weight:700;color:#000;">Step 4:</div>
<div class="t" style="left:120.50px;top:267.06px;font-family:'Liberation Serif',serif;font-size:18px;font-weight:400;color:#000;transform:scaleX(1.0124);transform-origin:0 0;">Go through the same projection process for Year 3 in rows 324 - 380. Write Year 3 assumption in rows</div>
<div class="t" style="left:120.50px;top:290.06px;font-family:'Liberation Serif',serif;font-size:18px;font-weight:400;color:#000;">407 - 464.</div>
<div class="t" style="left:48.50px;top:336.06px;font-family:'Liberation Serif',serif;font-size:18px;font-weight:700;color:#000;">Step 5:</div>
<div class="t" style="left:120.50px;top:336.06px;font-family:'Liberation Serif',serif;font-size:18px;font-weight:400;color:#000;">Proceed to the Capital Budget Worksheet.</div>
<div class="t" style="left:458.50px;top:383.06px;font-family:'Liberation Serif',serif;font-size:18px;font-weight:400;color:#000;">Note:  To print individual years' data, see Print Options Sheet</div>
<div class="t" style="left:49.00px;top:429.06px;font-family:'Liberation Serif',serif;font-size:18px;font-weight:700;color:#000;transform:scaleX(0.9794);transform-origin:0 0;">OPERATING EXPENSE PROJECTIONS</div>
<div class="t" style="left:55.00px;top:452.06px;font-family:'Liberation Serif',serif;font-size:18px;font-weight:700;color:#000;transform:scaleX(0.9939);transform-origin:0 0;">Self Storage Business</div>
<div class="t" style="left:49.00px;top:498.06px;font-family:'Liberation Serif',serif;font-size:18px;font-weight:700;color:#000;">Year 1</div>
<div class="t" style="left:387.50px;top:498.06px;font-family:'Liberation Serif',serif;font-size:18px;font-weight:700;color:#000;">JAN</div>
<div class="t" style="left:476.50px;top:498.06px;font-family:'Liberation Serif',serif;font-size:18px;font-weight:700;color:#000;">FEB</div>
<div class="t" style="left:561.38px;top:498.06px;font-family:'Liberation Serif',serif;font-size:18px;font-weight:700;color:#000;">MAR</div>
<div class="t" style="left:653.38px;top:498.06px;font-family:'Liberation Serif',serif;font-size:18px;font-weight:700;color:#000;">APR</div>
<div class="t" style="left:740.31px;top:498.06px;font-family:'Liberation Serif',serif;font-size:18px;font-weight:700;color:#000;">MAY</div>
<div class="t" style="left:832.50px;top:498.06px;font-family:'Liberation Serif',serif;font-size:18px;font-weight:700;color:#000;">JUN</div>
<div class="t" style="left:922.00px;top:498.06px;font-family:'Liberation Serif',serif;font-size:18px;font-weight:700;color:#000;">JUL</div>
<div class="t" style="left:1008.00px;top:498.06px;font-family:'Liberation Serif',serif;font-size:18px;font-weight:700;color:#000;">AUG</div>
<div class="t" style="left:1100.50px;top:498.06px;font-family:'Liberation Serif',serif;font-size:18px;font-weight:700;color:#000;">SEP</div>
<div class="t" style="left:1186.50px;top:498.06px;font-family:'Liberation Serif',serif;font-size:18px;font-weight:700;color:#000;">OCT</div>
<div class="t" style="left:1275.00px;top:498.06px;font-family:'Liberation Serif',serif;font-size:18px;font-weight:700;color:#000;">NOV</div>
<div class="t" style="left:1365.00px;top:498.06px;font-family:'Liberation Serif',serif;font-size:18px;font-weight:700;color:#000;">DEC</div>
<div class="t" style="left:1442.31px;top:498.06px;font-family:'Liberation Serif',serif;font-size:18px;font-weight:700;color:#000;">TOTAL</div>
<div class="t" style="left:54.50px;top:521.06px;font-family:'Liberation Serif',serif;font-size:18px;font-weight:700;color:#000;">General &amp; Administrative</div>
<div class="t" style="left:77.00px;top:543.76px;font-family:'Liberation Serif',serif;font-size:18px;font-weight:400;color:#000;transform:scaleX(0.9900);transform-origin:0 0;">Bank Charges</div>
<div class="t" style="left:77.00px;top:566.76px;font-family:'Liberation Serif',serif;font-size:18px;font-weight:400;color:#000;transform:scaleX(0.9900);transform-origin:0 0;">Dues &amp; Subscriptions</div>
<div class="t" style="left:77.00px;top:589.76px;font-family:'Liberation Serif',serif;font-size:18px;font-weight:400;color:#000;transform:scaleX(0.9900);transform-origin:0 0;">Equipment Rent</div>
<div class="t" style="left:77.00px;top:612.76px;font-family:'Liberation Serif',serif;font-size:18px;font-weight:400;color:#000;transform:scaleX(0.9900);transform-origin:0 0;">Insurance</div>
<div class="t" style="left:77.00px;top:635.76px;font-family:'Liberation Serif',serif;font-size:18px;font-weight:400;color:#000;transform:scaleX(0.9900);transform-origin:0 0;">Certifications &amp; Inspections</div>
<div class="t" style="left:77.00px;top:658.76px;font-family:'Liberation Serif',serif;font-size:18px;font-weight:400;color:#000;transform:scaleX(0.9900);transform-origin:0 0;">Meals &amp; Entertainment</div>
<div class="t" style="left:77.00px;top:681.76px;font-family:'Liberation Serif',serif;font-size:18px;font-weight:400;color:#000;transform:scaleX(0.9900);transform-origin:0 0;">Miscellaneous</div>
<div class="t" style="left:77.00px;top:704.76px;font-family:'Liberation Serif',serif;font-size:18px;font-weight:400;color:#000;transform:scaleX(0.9900);transform-origin:0 0;">Office Expense (postage)</div>
<div class="t" style="left:77.00px;top:727.76px;font-family:'Liberation Serif',serif;font-size:18px;font-weight:400;color:#000;transform:scaleX(0.9900);transform-origin:0 0;">Office Supplies</div>
<div class="t" style="left:77.00px;top:750.76px;font-family:'Liberation Serif',serif;font-size:18px;font-weight:400;color:#000;transform:scaleX(0.9900);transform-origin:0 0;">Outside Services</div>
<div class="t" style="left:77.00px;top:773.76px;font-family:'Liberation Serif',serif;font-size:18px;font-weight:400;color:#000;transform:scaleX(0.9900);transform-origin:0 0;">Payroll Expenses</div>
<div class="t" style="left:96.50px;top:796.76px;font-family:'Liberation Serif',serif;font-size:18px;font-weight:400;color:#000;transform:scaleX(0.9900);transform-origin:0 0;">Salaries &amp; Wages</div>
<div class="t" style="left:96.50px;top:819.76px;font-family:'Liberation Serif',serif;font-size:18px;font-weight:400;color:#000;transform:scaleX(0.9900);transform-origin:0 0;">Payroll Taxes</div>
<div class="t" style="left:96.50px;top:842.76px;font-family:'Liberation Serif',serif;font-size:18px;font-weight:400;color:#000;transform:scaleX(0.9900);transform-origin:0 0;">Benefits</div>
<div class="t" style="left:96.50px;top:865.76px;font-family:'Liberation Serif',serif;font-size:18px;font-weight:400;color:#000;transform:scaleX(0.9900);transform-origin:0 0;">Other</div>
<div class="t" style="left:77.00px;top:888.76px;font-family:'Liberation Serif',serif;font-size:18px;font-weight:400;color:#000;transform:scaleX(0.9900);transform-origin:0 0;">Professional Fees</div>
<div class="t" style="left:77.00px;top:911.76px;font-family:'Liberation Serif',serif;font-size:18px;font-weight:400;color:#000;transform:scaleX(0.9900);transform-origin:0 0;">Property Taxes</div>
<div class="t" style="left:425.87px;top:546.25px;font-family:'Liberation Sans',sans-serif;font-size:15px;font-weight:400;color:#000;transform:scaleX(0.9400);transform-origin:0 0;">50</div>
<div class="t" style="left:514.87px;top:546.25px;font-family:'Liberation Sans',sans-serif;font-size:15px;font-weight:400;color:#000;transform:scaleX(0.9400);transform-origin:0 0;">50</div>
<div class="t" style="left:603.87px;top:546.25px;font-family:'Liberation Sans',sans-serif;font-size:15px;font-weight:400;color:#000;transform:scaleX(0.9400);transform-origin:0 0;">50</div>
<div class="t" style="left:692.87px;top:546.25px;font-family:'Liberation Sans',sans-serif;font-size:15px;font-weight:400;color:#000;transform:scaleX(0.9400);transform-origin:0 0;">50</div>
<div class="t" style="left:781.87px;top:546.25px;font-family:'Liberation Sans',sans-serif;font-size:15px;font-weight:400;color:#000;transform:scaleX(0.9400);transform-origin:0 0;">50</div>
<div class="t" style="left:870.87px;top:546.25px;font-family:'Liberation Sans',sans-serif;font-size:15px;font-weight:400;color:#000;transform:scaleX(0.9400);transform-origin:0 0;">50</div>
<div class="t" style="left:959.87px;top:546.25px;font-family:'Liberation Sans',sans-serif;font-size:15px;font-weight:400;color:#000;transform:scaleX(0.9400);transform-origin:0 0;">50</div>
<div class="t" style="left:1048.87px;top:546.25px;font-family:'Liberation Sans',sans-serif;font-size:15px;font-weight:400;color:#000;transform:scaleX(0.9400);transform-origin:0 0;">50</div>
<div class="t" style="left:1137.87px;top:546.25px;font-family:'Liberation Sans',sans-serif;font-size:15px;font-weight:400;color:#000;transform:scaleX(0.9400);transform-origin:0 0;">50</div>
<div class="t" style="left:1226.87px;top:546.25px;font-family:'Liberation Sans',sans-serif;font-size:15px;font-weight:400;color:#000;transform:scaleX(0.9400);transform-origin:0 0;">50</div>
<div class="t" style="left:1315.87px;top:546.25px;font-family:'Liberation Sans',sans-serif;font-size:15px;font-weight:400;color:#000;transform:scaleX(0.9400);transform-origin:0 0;">50</div>
<div class="t" style="left:1404.87px;top:546.25px;font-family:'Liberation Sans',sans-serif;font-size:15px;font-weight:400;color:#000;transform:scaleX(0.9400);transform-origin:0 0;">50</div>
<div class="t" style="left:1493.36px;top:549.08px;font-family:'Liberation Sans',sans-serif;font-size:12.5px;font-weight:400;color:#000;transform:scaleX(0.8450);transform-origin:0 0;">600</div>
<div class="t" style="left:436.62px;top:570.67px;font-family:'Liberation Sans',sans-serif;font-size:14.5px;font-weight:400;color:#000;">-</div>
<div class="t" style="left:525.62px;top:570.67px;font-family:'Liberation Sans',sans-serif;font-size:14.5px;font-weight:400;color:#000;">-</div>
<div class="t" style="left:614.62px;top:570.67px;font-family:'Liberation Sans',sans-serif;font-size:14.5px;font-weight:400;color:#000;">-</div>
<div class="t" style="left:703.62px;top:570.67px;font-family:'Liberation Sans',sans-serif;font-size:14.5px;font-weight:400;color:#000;">-</div>
<div class="t" style="left:792.62px;top:570.67px;font-family:'Liberation Sans',sans-serif;font-size:14.5px;font-weight:400;color:#000;">-</div>
<div class="t" style="left:881.62px;top:570.67px;font-family:'Liberation Sans',sans-serif;font-size:14.5px;font-weight:400;color:#000;">-</div>
<div class="t" style="left:970.62px;top:570.67px;font-family:'Liberation Sans',sans-serif;font-size:14.5px;font-weight:400;color:#000;">-</div>
<div class="t" style="left:1059.62px;top:570.67px;font-family:'Liberation Sans',sans-serif;font-size:14.5px;font-weight:400;color:#000;">-</div>
<div class="t" style="left:1148.62px;top:570.67px;font-family:'Liberation Sans',sans-serif;font-size:14.5px;font-weight:400;color:#000;">-</div>
<div class="t" style="left:1237.62px;top:570.67px;font-family:'Liberation Sans',sans-serif;font-size:14.5px;font-weight:400;color:#000;">-</div>
<div class="t" style="left:1326.62px;top:570.67px;font-family:'Liberation Sans',sans-serif;font-size:14.5px;font-weight:400;color:#000;">-</div>
<div class="t" style="left:1415.62px;top:570.67px;font-family:'Liberation Sans',sans-serif;font-size:14.5px;font-weight:400;color:#000;">-</div>
<div class="t" style="left:1506.88px;top:572.38px;font-family:'Liberation Sans',sans-serif;font-size:12.5px;font-weight:400;color:#000;">-</div>
<div class="t" style="left:406.25px;top:592.25px;font-family:'Liberation Sans',sans-serif;font-size:15px;font-weight:400;color:#000;transform:scaleX(0.9400);transform-origin:0 0;">2,000</div>
<div class="t" style="left:495.25px;top:592.25px;font-family:'Liberation Sans',sans-serif;font-size:15px;font-weight:400;color:#000;transform:scaleX(0.9400);transform-origin:0 0;">2,000</div>
<div class="t" style="left:584.25px;top:592.25px;font-family:'Liberation Sans',sans-serif;font-size:15px;font-weight:400;color:#000;transform:scaleX(0.9400);transform-origin:0 0;">2,000</div>
<div class="t" style="left:673.25px;top:592.25px;font-family:'Liberation Sans',sans-serif;font-size:15px;font-weight:400;color:#000;transform:scaleX(0.9400);transform-origin:0 0;">2,000</div>
<div class="t" style="left:762.25px;top:592.25px;font-family:'Liberation Sans',sans-serif;font-size:15px;font-weight:400;color:#000;transform:scaleX(0.9400);transform-origin:0 0;">2,000</div>
<div class="t" style="left:851.25px;top:592.25px;font-family:'Liberation Sans',sans-serif;font-size:15px;font-weight:400;color:#000;transform:scaleX(0.9400);transform-origin:0 0;">2,000</div>
<div class="t" style="left:940.25px;top:592.25px;font-family:'Liberation Sans',sans-serif;font-size:15px;font-weight:400;color:#000;transform:scaleX(0.9400);transform-origin:0 0;">2,000</div>
<div class="t" style="left:1029.25px;top:592.25px;font-family:'Liberation Sans',sans-serif;font-size:15px;font-weight:400;color:#000;transform:scaleX(0.9400);transform-origin:0 0;">2,000</div>
<div class="t" style="left:1118.25px;top:592.25px;font-family:'Liberation Sans',sans-serif;font-size:15px;font-weight:400;color:#000;transform:scaleX(0.9400);transform-origin:0 0;">2,000</div>
<div class="t" style="left:1207.25px;top:592.25px;font-family:'Liberation Sans',sans-serif;font-size:15px;font-weight:400;color:#000;transform:scaleX(0.9400);transform-origin:0 0;">2,000</div>
<div class="t" style="left:1296.25px;top:592.25px;font-family:'Liberation Sans',sans-serif;font-size:15px;font-weight:400;color:#000;transform:scaleX(0.9400);transform-origin:0 0;">2,000</div>
<div class="t" style="left:1385.25px;top:592.25px;font-family:'Liberation Sans',sans-serif;font-size:15px;font-weight:400;color:#000;transform:scaleX(0.9400);transform-origin:0 0;">2,000</div>
<div class="t" style="left:1478.68px;top:595.08px;font-family:'Liberation Sans',sans-serif;font-size:12.5px;font-weight:400;color:#000;transform:scaleX(0.8450);transform-origin:0 0;">24,000</div>
<div class="t" style="left:406.25px;top:615.25px;font-family:'Liberation Sans',sans-serif;font-size:15px;font-weight:400;color:#000;transform:scaleX(0.9400);transform-origin:0 0;">5,000</div>
<div class="t" style="left:495.25px;top:615.25px;font-family:'Liberation Sans',sans-serif;font-size:15px;font-weight:400;color:#000;transform:scaleX(0.9400);transform-origin:0 0;">5,000</div>
<div class="t" style="left:584.25px;top:615.25px;font-family:'Liberation Sans',sans-serif;font-size:15px;font-weight:400;color:#000;transform:scaleX(0.9400);transform-origin:0 0;">5,000</div>
<div class="t" style="left:673.25px;top:615.25px;font-family:'Liberation Sans',sans-serif;font-size:15px;font-weight:400;color:#000;transform:scaleX(0.9400);transform-origin:0 0;">5,000</div>
<div class="t" style="left:762.25px;top:615.25px;font-family:'Liberation Sans',sans-serif;font-size:15px;font-weight:400;color:#000;transform:scaleX(0.9400);transform-origin:0 0;">5,000</div>
<div class="t" style="left:851.25px;top:615.25px;font-family:'Liberation Sans',sans-serif;font-size:15px;font-weight:400;color:#000;transform:scaleX(0.9400);transform-origin:0 0;">5,000</div>
<div class="t" style="left:940.25px;top:615.25px;font-family:'Liberation Sans',sans-serif;font-size:15px;font-weight:400;color:#000;transform:scaleX(0.9400);transform-origin:0 0;">5,000</div>
<div class="t" style="left:1029.25px;top:615.25px;font-family:'Liberation Sans',sans-serif;font-size:15px;font-weight:400;color:#000;transform:scaleX(0.9400);transform-origin:0 0;">5,000</div>
<div class="t" style="left:1118.25px;top:615.25px;font-family:'Liberation Sans',sans-serif;font-size:15px;font-weight:400;color:#000;transform:scaleX(0.9400);transform-origin:0 0;">5,000</div>
<div class="t" style="left:1207.25px;top:615.25px;font-family:'Liberation Sans',sans-serif;font-size:15px;font-weight:400;color:#000;transform:scaleX(0.9400);transform-origin:0 0;">5,000</div>
<div class="t" style="left:1296.25px;top:615.25px;font-family:'Liberation Sans',sans-serif;font-size:15px;font-weight:400;color:#000;transform:scaleX(0.9400);transform-origin:0 0;">5,000</div>
<div class="t" style="left:1385.25px;top:615.25px;font-family:'Liberation Sans',sans-serif;font-size:15px;font-weight:400;color:#000;transform:scaleX(0.9400);transform-origin:0 0;">5,000</div>
<div class="t" style="left:1478.68px;top:618.08px;font-family:'Liberation Sans',sans-serif;font-size:12.5px;font-weight:400;color:#000;transform:scaleX(0.8450);transform-origin:0 0;">60,000</div>
<div class="t" style="left:436.62px;top:639.67px;font-family:'Liberation Sans',sans-serif;font-size:14.5px;font-weight:400;color:#000;">-</div>
<div class="t" style="left:525.62px;top:639.67px;font-family:'Liberation Sans',sans-serif;font-size:14.5px;font-weight:400;color:#000;">-</div>
<div class="t" style="left:614.62px;top:639.67px;font-family:'Liberation Sans',sans-serif;font-size:14.5px;font-weight:400;color:#000;">-</div>
<div class="t" style="left:703.62px;top:639.67px;font-family:'Liberation Sans',sans-serif;font-size:14.5px;font-weight:400;color:#000;">-</div>
<div class="t" style="left:792.62px;top:639.67px;font-family:'Liberation Sans',sans-serif;font-size:14.5px;font-weight:400;color:#000;">-</div>
<div class="t" style="left:881.62px;top:639.67px;font-family:'Liberation Sans',sans-serif;font-size:14.5px;font-weight:400;color:#000;">-</div>
<div class="t" style="left:970.62px;top:639.67px;font-family:'Liberation Sans',sans-serif;font-size:14.5px;font-weight:400;color:#000;">-</div>
<div class="t" style="left:1059.62px;top:639.67px;font-family:'Liberation Sans',sans-serif;font-size:14.5px;font-weight:400;color:#000;">-</div>
<div class="t" style="left:1148.62px;top:639.67px;font-family:'Liberation Sans',sans-serif;font-size:14.5px;font-weight:400;color:#000;">-</div>
<div class="t" style="left:1237.62px;top:639.67px;font-family:'Liberation Sans',sans-serif;font-size:14.5px;font-weight:400;color:#000;">-</div>
<div class="t" style="left:1326.62px;top:639.67px;font-family:'Liberation Sans',sans-serif;font-size:14.5px;font-weight:400;color:#000;">-</div>
<div class="t" style="left:1415.62px;top:639.67px;font-family:'Liberation Sans',sans-serif;font-size:14.5px;font-weight:400;color:#000;">-</div>
<div class="t" style="left:1506.88px;top:641.38px;font-family:'Liberation Sans',sans-serif;font-size:12.5px;font-weight:400;color:#000;">-</div>
<div class="t" style="left:436.62px;top:662.67px;font-family:'Liberation Sans',sans-serif;font-size:14.5px;font-weight:400;color:#000;">-</div>
<div class="t" style="left:525.62px;top:662.67px;font-family:'Liberation Sans',sans-serif;font-size:14.5px;font-weight:400;color:#000;">-</div>
<div class="t" style="left:614.62px;top:662.67px;font-family:'Liberation Sans',sans-serif;font-size:14.5px;font-weight:400;color:#000;">-</div>
<div class="t" style="left:703.62px;top:662.67px;font-family:'Liberation Sans',sans-serif;font-size:14.5px;font-weight:400;color:#000;">-</div>
<div class="t" style="left:792.62px;top:662.67px;font-family:'Liberation Sans',sans-serif;font-size:14.5px;font-weight:400;color:#000;">-</div>
<div class="t" style="left:881.62px;top:662.67px;font-family:'Liberation Sans',sans-serif;font-size:14.5px;font-weight:400;color:#000;">-</div>
<div class="t" style="left:970.62px;top:662.67px;font-family:'Liberation Sans',sans-serif;font-size:14.5px;font-weight:400;color:#000;">-</div>
<div class="t" style="left:1059.62px;top:662.67px;font-family:'Liberation Sans',sans-serif;font-size:14.5px;font-weight:400;color:#000;">-</div>
<div class="t" style="left:1148.62px;top:662.67px;font-family:'Liberation Sans',sans-serif;font-size:14.5px;font-weight:400;color:#000;">-</div>
<div class="t" style="left:1237.62px;top:662.67px;font-family:'Liberation Sans',sans-serif;font-size:14.5px;font-weight:400;color:#000;">-</div>
<div class="t" style="left:1326.62px;top:662.67px;font-family:'Liberation Sans',sans-serif;font-size:14.5px;font-weight:400;color:#000;">-</div>
<div class="t" style="left:1415.62px;top:662.67px;font-family:'Liberation Sans',sans-serif;font-size:14.5px;font-weight:400;color:#000;">-</div>
<div class="t" style="left:1506.88px;top:664.38px;font-family:'Liberation Sans',sans-serif;font-size:12.5px;font-weight:400;color:#000;">-</div>
<div class="t" style="left:436.62px;top:685.67px;font-family:'Liberation Sans',sans-serif;font-size:14.5px;font-weight:400;color:#000;">-</div>
<div class="t" style="left:525.62px;top:685.67px;font-family:'Liberation Sans',sans-serif;font-size:14.5px;font-weight:400;color:#000;">-</div>
<div class="t" style="left:614.62px;top:685.67px;font-family:'Liberation Sans',sans-serif;font-size:14.5px;font-weight:400;color:#000;">-</div>
<div class="t" style="left:703.62px;top:685.67px;font-family:'Liberation Sans',sans-serif;font-size:14.5px;font-weight:400;color:#000;">-</div>
<div class="t" style="left:792.62px;top:685.67px;font-family:'Liberation Sans',sans-serif;font-size:14.5px;font-weight:400;color:#000;">-</div>
<div class="t" style="left:881.62px;top:685.67px;font-family:'Liberation Sans',sans-serif;font-size:14.5px;font-weight:400;color:#000;">-</div>
<div class="t" style="left:970.62px;top:685.67px;font-family:'Liberation Sans',sans-serif;font-size:14.5px;font-weight:400;color:#000;">-</div>
<div class="t" style="left:1059.62px;top:685.67px;font-family:'Liberation Sans',sans-serif;font-size:14.5px;font-weight:400;color:#000;">-</div>
<div class="t" style="left:1148.62px;top:685.67px;font-family:'Liberation Sans',sans-serif;font-size:14.5px;font-weight:400;color:#000;">-</div>
<div class="t" style="left:1237.62px;top:685.67px;font-family:'Liberation Sans',sans-serif;font-size:14.5px;font-weight:400;color:#000;">-</div>
<div class="t" style="left:1326.62px;top:685.67px;font-family:'Liberation Sans',sans-serif;font-size:14.5px;font-weight:400;color:#000;">-</div>
<div class="t" style="left:1415.62px;top:685.67px;font-family:'Liberation Sans',sans-serif;font-size:14.5px;font-weight:400;color:#000;">-</div>
<div class="t" style="left:1506.88px;top:687.38px;font-family:'Liberation Sans',sans-serif;font-size:12.5px;font-weight:400;color:#000;">-</div>
<div class="t" style="left:1506.88px;top:710.38px;font-family:'Liberation Sans',sans-serif;font-size:12.5px;font-weight:400;color:#000;">-</div>
<div class="t" style="left:406.25px;top:730.25px;font-family:'Liberation Sans',sans-serif;font-size:15px;font-weight:400;color:#000;transform:scaleX(0.9400);transform-origin:0 0;">1,000</div>
<div class="t" style="left:495.25px;top:730.25px;font-family:'Liberation Sans',sans-serif;font-size:15px;font-weight:400;color:#000;transform:scaleX(0.9400);transform-origin:0 0;">1,000</div>
<div class="t" style="left:584.25px;top:730.25px;font-family:'Liberation Sans',sans-serif;font-size:15px;font-weight:400;color:#000;transform:scaleX(0.9400);transform-origin:0 0;">1,000</div>
<div class="t" style="left:673.25px;top:730.25px;font-family:'Liberation Sans',sans-serif;font-size:15px;font-weight:400;color:#000;transform:scaleX(0.9400);transform-origin:0 0;">1,000</div>
<div class="t" style="left:762.25px;top:730.25px;font-family:'Liberation Sans',sans-serif;font-size:15px;font-weight:400;color:#000;transform:scaleX(0.9400);transform-origin:0 0;">1,000</div>
<div class="t" style="left:851.25px;top:730.25px;font-family:'Liberation Sans',sans-serif;font-size:15px;font-weight:400;color:#000;transform:scaleX(0.9400);transform-origin:0 0;">1,000</div>
<div class="t" style="left:940.25px;top:730.25px;font-family:'Liberation Sans',sans-serif;font-size:15px;font-weight:400;color:#000;transform:scaleX(0.9400);transform-origin:0 0;">1,000</div>
<div class="t" style="left:1029.25px;top:730.25px;font-family:'Liberation Sans',sans-serif;font-size:15px;font-weight:400;color:#000;transform:scaleX(0.9400);transform-origin:0 0;">1,000</div>
<div class="t" style="left:1118.25px;top:730.25px;font-family:'Liberation Sans',sans-serif;font-size:15px;font-weight:400;color:#000;transform:scaleX(0.9400);transform-origin:0 0;">1,000</div>
<div class="t" style="left:1207.25px;top:730.25px;font-family:'Liberation Sans',sans-serif;font-size:15px;font-weight:400;color:#000;transform:scaleX(0.9400);transform-origin:0 0;">1,000</div>
<div class="t" style="left:1296.25px;top:730.25px;font-family:'Liberation Sans',sans-serif;font-size:15px;font-weight:400;color:#000;transform:scaleX(0.9400);transform-origin:0 0;">1,000</div>
<div class="t" style="left:1385.25px;top:730.25px;font-family:'Liberation Sans',sans-serif;font-size:15px;font-weight:400;color:#000;transform:scaleX(0.9400);transform-origin:0 0;">1,000</div>
<div class="t" style="left:1478.68px;top:733.08px;font-family:'Liberation Sans',sans-serif;font-size:12.5px;font-weight:400;color:#000;transform:scaleX(0.8450);transform-origin:0 0;">12,000</div>
<div class="t" style="left:1506.88px;top:756.38px;font-family:'Liberation Sans',sans-serif;font-size:12.5px;font-weight:400;color:#000;">-</div>
<div class="t" style="left:436.62px;top:800.67px;font-family:'Liberation Sans',sans-serif;font-size:14.5px;font-weight:400;color:#000;">-</div>
<div class="t" style="left:525.62px;top:800.67px;font-family:'Liberation Sans',sans-serif;font-size:14.5px;font-weight:400;color:#000;">-</div>
<div class="t" style="left:614.62px;top:800.67px;font-family:'Liberation Sans',sans-serif;font-size:14.5px;font-weight:400;color:#000;">-</div>
<div class="t" style="left:665.38px;top:799.25px;font-family:'Liberation Sans',sans-serif;font-size:15px;font-weight:400;color:#000;transform:scaleX(0.9400);transform-origin:0 0;">31,500</div>
<div class="t" style="left:754.38px;top:799.25px;font-family:'Liberation Sans',sans-serif;font-size:15px;font-weight:400;color:#000;transform:scaleX(0.9400);transform-origin:0 0;">31,500</div>
<div class="t" style="left:843.38px;top:799.25px;font-family:'Liberation Sans',sans-serif;font-size:15px;font-weight:400;color:#000;transform:scaleX(0.9400);transform-origin:0 0;">31,500</div>
<div class="t" style="left:932.38px;top:799.25px;font-family:'Liberation Sans',sans-serif;font-size:15px;font-weight:400;color:#000;transform:scaleX(0.9400);transform-origin:0 0;">31,500</div>
<div class="t" style="left:1021.38px;top:799.25px;font-family:'Liberation Sans',sans-serif;font-size:15px;font-weight:400;color:#000;transform:scaleX(0.9400);transform-origin:0 0;">31,500</div>
<div class="t" style="left:1110.38px;top:799.25px;font-family:'Liberation Sans',sans-serif;font-size:15px;font-weight:400;color:#000;transform:scaleX(0.9400);transform-origin:0 0;">31,500</div>
<div class="t" style="left:1199.38px;top:799.25px;font-family:'Liberation Sans',sans-serif;font-size:15px;font-weight:400;color:#000;transform:scaleX(0.9400);transform-origin:0 0;">31,500</div>
<div class="t" style="left:1288.38px;top:799.25px;font-family:'Liberation Sans',sans-serif;font-size:15px;font-weight:400;color:#000;transform:scaleX(0.9400);transform-origin:0 0;">31,500</div>
<div class="t" style="left:1377.38px;top:799.25px;font-family:'Liberation Sans',sans-serif;font-size:15px;font-weight:400;color:#000;transform:scaleX(0.9400);transform-origin:0 0;">31,500</div>
<div class="t" style="left:1472.87px;top:802.08px;font-family:'Liberation Sans',sans-serif;font-size:12.5px;font-weight:400;color:#000;transform:scaleX(0.8450);transform-origin:0 0;">283,500</div>
<div class="t" style="left:436.62px;top:823.67px;font-family:'Liberation Sans',sans-serif;font-size:14.5px;font-weight:400;color:#000;">-</div>
<div class="t" style="left:525.62px;top:823.67px;font-family:'Liberation Sans',sans-serif;font-size:14.5px;font-weight:400;color:#000;">-</div>
<div class="t" style="left:614.62px;top:823.67px;font-family:'Liberation Sans',sans-serif;font-size:14.5px;font-weight:400;color:#000;">-</div>
<div class="t" style="left:666.43px;top:822.25px;font-family:'Liberation Sans',sans-serif;font-size:15px;font-weight:400;color:#000;transform:scaleX(0.9400);transform-origin:0 0;">11,025</div>
<div class="t" style="left:755.43px;top:822.25px;font-family:'Liberation Sans',sans-serif;font-size:15px;font-weight:400;color:#000;transform:scaleX(0.9400);transform-origin:0 0;">11,025</div>
<div class="t" style="left:844.43px;top:822.25px;font-family:'Liberation Sans',sans-serif;font-size:15px;font-weight:400;color:#000;transform:scaleX(0.9400);transform-origin:0 0;">11,025</div>
<div class="t" style="left:933.43px;top:822.25px;font-family:'Liberation Sans',sans-serif;font-size:15px;font-weight:400;color:#000;transform:scaleX(0.9400);transform-origin:0 0;">11,025</div>
<div class="t" style="left:1022.43px;top:822.25px;font-family:'Liberation Sans',sans-serif;font-size:15px;font-weight:400;color:#000;transform:scaleX(0.9400);transform-origin:0 0;">11,025</div>
<div class="t" style="left:1111.43px;top:822.25px;font-family:'Liberation Sans',sans-serif;font-size:15px;font-weight:400;color:#000;transform:scaleX(0.9400);transform-origin:0 0;">11,025</div>
<div class="t" style="left:1200.43px;top:822.25px;font-family:'Liberation Sans',sans-serif;font-size:15px;font-weight:400;color:#000;transform:scaleX(0.9400);transform-origin:0 0;">11,025</div>
<div class="t" style="left:1289.43px;top:822.25px;font-family:'Liberation Sans',sans-serif;font-size:15px;font-weight:400;color:#000;transform:scaleX(0.9400);transform-origin:0 0;">11,025</div>
<div class="t" style="left:1378.43px;top:822.25px;font-family:'Liberation Sans',sans-serif;font-size:15px;font-weight:400;color:#000;transform:scaleX(0.9400);transform-origin:0 0;">11,025</div>
<div class="t" style="left:1478.68px;top:825.08px;font-family:'Liberation Sans',sans-serif;font-size:12.5px;font-weight:400;color:#000;transform:scaleX(0.8450);transform-origin:0 0;">99,225</div>
<div class="t" style="left:436.62px;top:846.67px;font-family:'Liberation Sans',sans-serif;font-size:14.5px;font-weight:400;color:#000;">-</div>
<div class="t" style="left:525.62px;top:846.67px;font-family:'Liberation Sans',sans-serif;font-size:14.5px;font-weight:400;color:#000;">-</div>
<div class="t" style="left:614.62px;top:846.67px;font-family:'Liberation Sans',sans-serif;font-size:14.5px;font-weight:400;color:#000;">-</div>
<div class="t" style="left:673.25px;top:845.25px;font-family:'Liberation Sans',sans-serif;font-size:15px;font-weight:400;color:#000;transform:scaleX(0.9400);transform-origin:0 0;">3,780</div>
<div class="t" style="left:762.25px;top:845.25px;font-family:'Liberation Sans',sans-serif;font-size:15px;font-weight:400;color:#000;transform:scaleX(0.9400);transform-origin:0 0;">3,780</div>
<div class="t" style="left:851.25px;top:845.25px;font-family:'Liberation Sans',sans-serif;font-size:15px;font-weight:400;color:#000;transform:scaleX(0.9400);transform-origin:0 0;">3,780</div>
<div class="t" style="left:940.25px;top:845.25px;font-family:'Liberation Sans',sans-serif;font-size:15px;font-weight:400;color:#000;transform:scaleX(0.9400);transform-origin:0 0;">3,780</div>
<div class="t" style="left:1029.25px;top:845.25px;font-family:'Liberation Sans',sans-serif;font-size:15px;font-weight:400;color:#000;transform:scaleX(0.9400);transform-origin:0 0;">3,780</div>
<div class="t" style="left:1118.25px;top:845.25px;font-family:'Liberation Sans',sans-serif;font-size:15px;font-weight:400;color:#000;transform:scaleX(0.9400);transform-origin:0 0;">3,780</div>
<div class="t" style="left:1207.25px;top:845.25px;font-family:'Liberation Sans',sans-serif;font-size:15px;font-weight:400;color:#000;transform:scaleX(0.9400);transform-origin:0 0;">3,780</div>
<div class="t" style="left:1296.25px;top:845.25px;font-family:'Liberation Sans',sans-serif;font-size:15px;font-weight:400;color:#000;transform:scaleX(0.9400);transform-origin:0 0;">3,780</div>
<div class="t" style="left:1385.25px;top:845.25px;font-family:'Liberation Sans',sans-serif;font-size:15px;font-weight:400;color:#000;transform:scaleX(0.9400);transform-origin:0 0;">3,780</div>
<div class="t" style="left:1478.68px;top:848.08px;font-family:'Liberation Sans',sans-serif;font-size:12.5px;font-weight:400;color:#000;transform:scaleX(0.8450);transform-origin:0 0;">34,020</div>
<div class="t" style="left:406.25px;top:868.25px;font-family:'Liberation Sans',sans-serif;font-size:15px;font-weight:400;color:#000;transform:scaleX(0.9400);transform-origin:0 0;">1,000</div>
<div class="t" style="left:495.25px;top:868.25px;font-family:'Liberation Sans',sans-serif;font-size:15px;font-weight:400;color:#000;transform:scaleX(0.9400);transform-origin:0 0;">1,000</div>
<div class="t" style="left:584.25px;top:868.25px;font-family:'Liberation Sans',sans-serif;font-size:15px;font-weight:400;color:#000;transform:scaleX(0.9400);transform-origin:0 0;">1,000</div>
<div class="t" style="left:673.25px;top:868.25px;font-family:'Liberation Sans',sans-serif;font-size:15px;font-weight:400;color:#000;transform:scaleX(0.9400);transform-origin:0 0;">1,000</div>
<div class="t" style="left:762.25px;top:868.25px;font-family:'Liberation Sans',sans-serif;font-size:15px;font-weight:400;color:#000;transform:scaleX(0.9400);transform-origin:0 0;">1,000</div>
<div class="t" style="left:851.25px;top:868.25px;font-family:'Liberation Sans',sans-serif;font-size:15px;font-weight:400;color:#000;transform:scaleX(0.9400);transform-origin:0 0;">1,000</div>
<div class="t" style="left:940.25px;top:868.25px;font-family:'Liberation Sans',sans-serif;font-size:15px;font-weight:400;color:#000;transform:scaleX(0.9400);transform-origin:0 0;">1,000</div>
<div class="t" style="left:1029.25px;top:868.25px;font-family:'Liberation Sans',sans-serif;font-size:15px;font-weight:400;color:#000;transform:scaleX(0.9400);transform-origin:0 0;">1,000</div>
<div class="t" style="left:1118.25px;top:868.25px;font-family:'Liberation Sans',sans-serif;font-size:15px;font-weight:400;color:#000;transform:scaleX(0.9400);transform-origin:0 0;">1,000</div>
<div class="t" style="left:1207.25px;top:868.25px;font-family:'Liberation Sans',sans-serif;font-size:15px;font-weight:400;color:#000;transform:scaleX(0.9400);transform-origin:0 0;">1,000</div>
<div class="t" style="left:1296.25px;top:868.25px;font-family:'Liberation Sans',sans-serif;font-size:15px;font-weight:400;color:#000;transform:scaleX(0.9400);transform-origin:0 0;">1,000</div>
<div class="t" style="left:1385.25px;top:868.25px;font-family:'Liberation Sans',sans-serif;font-size:15px;font-weight:400;color:#000;transform:scaleX(0.9400);transform-origin:0 0;">1,000</div>
<div class="t" style="left:1478.68px;top:871.08px;font-family:'Liberation Sans',sans-serif;font-size:12.5px;font-weight:400;color:#000;transform:scaleX(0.8450);transform-origin:0 0;">12,000</div>
<div class="t" style="left:436.62px;top:892.67px;font-family:'Liberation Sans',sans-serif;font-size:14.5px;font-weight:400;color:#000;">-</div>
<div class="t" style="left:525.62px;top:892.67px;font-family:'Liberation Sans',sans-serif;font-size:14.5px;font-weight:400;color:#000;">-</div>
<div class="t" style="left:614.62px;top:892.67px;font-family:'Liberation Sans',sans-serif;font-size:14.5px;font-weight:400;color:#000;">-</div>
<div class="t" style="left:703.62px;top:892.67px;font-family:'Liberation Sans',sans-serif;font-size:14.5px;font-weight:400;color:#000;">-</div>
<div class="t" style="left:792.62px;top:892.67px;font-family:'Liberation Sans',sans-serif;font-size:14.5px;font-weight:400;color:#000;">-</div>
<div class="t" style="left:881.62px;top:892.67px;font-family:'Liberation Sans',sans-serif;font-size:14.5px;font-weight:400;color:#000;">-</div>
<div class="t" style="left:970.62px;top:892.67px;font-family:'Liberation Sans',sans-serif;font-size:14.5px;font-weight:400;color:#000;">-</div>
<div class="t" style="left:1059.62px;top:892.67px;font-family:'Liberation Sans',sans-serif;font-size:14.5px;font-weight:400;color:#000;">-</div>
<div class="t" style="left:1148.62px;top:892.67px;font-family:'Liberation Sans',sans-serif;font-size:14.5px;font-weight:400;color:#000;">-</div>
<div class="t" style="left:1237.62px;top:892.67px;font-family:'Liberation Sans',sans-serif;font-size:14.5px;font-weight:400;color:#000;">-</div>
<div class="t" style="left:1326.62px;top:892.67px;font-family:'Liberation Sans',sans-serif;font-size:14.5px;font-weight:400;color:#000;">-</div>
<div class="t" style="left:1415.62px;top:892.67px;font-family:'Liberation Sans',sans-serif;font-size:14.5px;font-weight:400;color:#000;">-</div>
<div class="t" style="left:1506.88px;top:894.38px;font-family:'Liberation Sans',sans-serif;font-size:12.5px;font-weight:400;color:#000;">-</div>
<div class="t" style="left:436.62px;top:915.67px;font-family:'Liberation Sans',sans-serif;font-size:14.5px;font-weight:400;color:#000;">-</div>
<div class="t" style="left:525.62px;top:915.67px;font-family:'Liberation Sans',sans-serif;font-size:14.5px;font-weight:400;color:#000;">-</div>
<div class="t" style="left:614.62px;top:915.67px;font-family:'Liberation Sans',sans-serif;font-size:14.5px;font-weight:400;color:#000;">-</div>
<div class="t" style="left:703.62px;top:915.67px;font-family:'Liberation Sans',sans-serif;font-size:14.5px;font-weight:400;color:#000;">-</div>
<div class="t" style="left:792.62px;top:915.67px;font-family:'Liberation Sans',sans-serif;font-size:14.5px;font-weight:400;color:#000;">-</div>
<div class="t" style="left:881.62px;top:915.67px;font-family:'Liberation Sans',sans-serif;font-size:14.5px;font-weight:400;color:#000;">-</div>
<div class="t" style="left:970.62px;top:915.67px;font-family:'Liberation Sans',sans-serif;font-size:14.5px;font-weight:400;color:#000;">-</div>
<div class="t" style="left:1059.62px;top:915.67px;font-family:'Liberation Sans',sans-serif;font-size:14.5px;font-weight:400;color:#000;">-</div>
<div class="t" style="left:1148.62px;top:915.67px;font-family:'Liberation Sans',sans-serif;font-size:14.5px;font-weight:400;color:#000;">-</div>
<div class="t" style="left:1237.62px;top:915.67px;font-family:'Liberation Sans',sans-serif;font-size:14.5px;font-weight:400;color:#000;">-</div>
<div class="t" style="left:1326.62px;top:915.67px;font-family:'Liberation Sans',sans-serif;font-size:14.5px;font-weight:400;color:#000;">-</div>
<div class="t" style="left:1415.62px;top:915.67px;font-family:'Liberation Sans',sans-serif;font-size:14.5px;font-weight:400;color:#000;">-</div>
<div class="t" style="left:1506.88px;top:917.38px;font-family:'Liberation Sans',sans-serif;font-size:12.5px;font-weight:400;color:#000;">-</div>
<svg style="position:absolute;left:353px;top:863px;" width="7" height="7" viewBox="0 0 7 7"><path d="M0 0 L7 0 L7 7 Z" fill="#D00"/></svg>
<div style="left:45px;top:377px;width:283px;height:26px;background:#F0F0F0;box-shadow:inset -1px -1px 0 #A0A0A0, inset 1px 1px 0 #fff;"></div>
<div class="t" style="left:52.00px;top:380.56px;font-family:'Liberation Serif',serif;font-size:18px;font-weight:400;color:#000;transform:scaleX(1.0075);transform-origin:0 0;">Print Operating Expenses - All Years</div>
<div style="left:1834px;top:447px;width:56px;height:26px;box-sizing:border-box;border:2px solid #217346;background:transparent;"></div>
<div style="left:0px;top:4px;width:88px;height:36px;background:#217346;"></div>
<div class="t" style="left:28.60px;top:13.55px;font-family:'Liberation Sans',sans-serif;font-size:17px;font-weight:400;color:#fff;transform:scaleX(0.8446);transform-origin:0 0;">FILE</div>
<div style="left:88px;top:39px;width:1833px;height:1px;background:#D5D5D5;"></div>
<div style="left:92px;top:39px;width:78px;height:1px;background:#fff;"></div>
<div style="left:92px;top:4px;width:1px;height:36px;background:#D5D5D5;"></div>
<div style="left:170px;top:4px;width:1px;height:36px;background:#D5D5D5;"></div>
<div style="left:92px;top:4px;width:79px;height:1px;background:#D5D5D5;"></div>
<div class="t" style="left:106.00px;top:13.55px;font-family:'Liberation Sans',sans-serif;font-size:17px;font-weight:400;color:#217346;">HOME</div>
<div class="t" style="left:186.00px;top:13.55px;font-family:'Liberation Sans',sans-serif;font-size:17px;font-weight:400;color:#444;transform:scaleX(0.9000);transform-origin:0 0;">INSERT</div>
<div class="t" style="left:271.00px;top:13.55px;font-family:'Liberation Sans',sans-serif;font-size:17px;font-weight:400;color:#444;transform:scaleX(0.9430);transform-origin:0 0;">PAGE LAYOUT</div>
<div class="t" style="left:411.00px;top:13.55px;font-family:'Liberation Sans',sans-serif;font-size:17px;font-weight:400;color:#444;transform:scaleX(0.9735);transform-origin:0 0;">FORMULAS</div>
<div class="t" style="left:533.00px;top:13.55px;font-family:'Liberation Sans',sans-serif;font-size:17px;font-weight:400;color:#444;">DATA</div>
<div class="t" style="left:606.00px;top:13.55px;font-family:'Liberation Sans',sans-serif;font-size:17px;font-weight:400;color:#444;transform:scaleX(0.9162);transform-origin:0 0;">REVIEW</div>
<div class="t" style="left:697.00px;top:13.55px;font-family:'Liberation Sans',sans-serif;font-size:17px;font-weight:400;color:#444;transform:scaleX(0.9425);transform-origin:0 0;">VIEW</div>
<div class="t" style="left:768.00px;top:13.55px;font-family:'Liberation Sans',sans-serif;font-size:17px;font-weight:400;color:#444;">ASAP Utilities</div>
<div class="t" style="left:1823.40px;top:13.85px;font-family:'Liberation Sans',sans-serif;font-size:17px;font-weight:400;color:#444;transform:scaleX(1.0192);transform-origin:0 0;">Sign in</div>
<svg style="position:absolute;left:1884px;top:4px;" width="36" height="36" viewBox="0 0 36 36"><rect width="36" height="36" fill="#ABABAB"/><ellipse cx="17.5" cy="12.5" rx="7" ry="8.2" fill="#fff" stroke="#9a9a9a" stroke-width="0.8"/><path d="M4 36 Q4.5 21 17.5 20.5 Q31 21 32 36 Z" fill="#fff"/><ellipse cx="17.5" cy="12.5" rx="6.6" ry="7.8" fill="#fff"/></svg>
<div style="left:0px;top:171px;width:1921px;height:1px;background:#D5D5D5;"></div>
<div style="left:218px;top:44px;width:1px;height:124px;background:#E1E1E1;"></div>
<div style="left:483px;top:44px;width:1px;height:124px;background:#E1E1E1;"></div>
<div style="left:840px;top:44px;width:1px;height:124px;background:#E1E1E1;"></div>
<div style="left:1023px;top:44px;width:1px;height:124px;background:#E1E1E1;"></div>
<div style="left:1283px;top:44px;width:1px;height:124px;background:#E1E1E1;"></div>
<div style="left:1470px;top:44px;width:1px;height:124px;background:#E1E1E1;"></div>
<div style="left:1727px;top:44px;width:1px;height:124px;background:#E1E1E1;"></div>
<div class="t" style="left:63.60px;top:151.55px;font-family:'Liberation Sans',sans-serif;font-size:15px;font-weight:400;color:#666;transform:scaleX(1.0412);transform-origin:0 0;">Clipboard</div>
<div class="t" style="left:324.70px;top:151.55px;font-family:'Liberation Sans',sans-serif;font-size:15px;font-weight:400;color:#666;transform:scaleX(1.0100);transform-origin:0 0;">Font</div>
<div class="t" style="left:614.60px;top:151.55px;font-family:'Liberation Sans',sans-serif;font-size:15px;font-weight:400;color:#666;transform:scaleX(1.0742);transform-origin:0 0;">Alignment</div>
<div class="t" style="left:891.90px;top:151.55px;font-family:'Liberation Sans',sans-serif;font-size:15px;font-weight:400;color:#666;transform:scaleX(1.0511);transform-origin:0 0;">Number</div>
<div class="t" style="left:1133.50px;top:151.55px;font-family:'Liberation Sans',sans-serif;font-size:15px;font-weight:400;color:#666;transform:scaleX(0.9419);transform-origin:0 0;">Styles</div>
<div class="t" style="left:1360.00px;top:151.55px;font-family:'Liberation Sans',sans-serif;font-size:15px;font-weight:400;color:#666;transform:scaleX(0.9648);transform-origin:0 0;">Cells</div>
<div class="t" style="left:1575.30px;top:151.55px;font-family:'Liberation Sans',sans-serif;font-size:15px;font-weight:400;color:#666;transform:scaleX(1.0354);transform-origin:0 0;">Editing</div>
<svg style="position:absolute;left:202px;top:155px;" width="10" height="9" viewBox="0 0 10 9"><path d="M1 8 L1 1 L8 1" stroke="#777" fill="none" stroke-width="1"/><path d="M3 3 L8 8 M8 4.5 L8 8 L4.5 8" stroke="#555" fill="none" stroke-width="1.3"/></svg>
<svg style="position:absolute;left:467px;top:155px;" width="10" height="9" viewBox="0 0 10 9"><path d="M1 8 L1 1 L8 1" stroke="#777" fill="none" stroke-width="1"/><path d="M3 3 L8 8 M8 4.5 L8 8 L4.5 8" stroke="#555" fill="none" stroke-width="1.3"/></svg>
<svg style="position:absolute;left:824px;top:155px;" width="10" height="9" viewBox="0 0 10 9"><path d="M1 8 L1 1 L8 1" stroke="#777" fill="none" stroke-width="1"/><path d="M3 3 L8 8 M8 4.5 L8 8 L4.5 8" stroke="#555" fill="none" stroke-width="1.3"/></svg>
<svg style="position:absolute;left:1007px;top:155px;" width="10" height="9" viewBox="0 0 10 9"><path d="M1 8 L1 1 L8 1" stroke="#777" fill="none" stroke-width="1"/><path d="M3 3 L8 8 M8 4.5 L8 8 L4.5 8" stroke="#555" fill="none" stroke-width="1.3"/></svg>
<div class="t" style="left:12.80px;top:100.25px;font-family:'Liberation Sans',sans-serif;font-size:17px;font-weight:400;color:#444;transform:scaleX(0.9172);transform-origin:0 0;">Paste</div>
<div class="t" style="left:92.30px;top:51.95px;font-family:'Liberation Sans',sans-serif;font-size:17px;font-weight:400;color:#444;transform:scaleX(1.0075);transform-origin:0 0;">Cut</div>
<div class="t" style="left:92.30px;top:85.25px;font-family:'Liberation Sans',sans-serif;font-size:17px;font-weight:400;color:#444;transform:scaleX(1.0239);transform-origin:0 0;">Copy</div>
<div class="t" style="left:92.70px;top:117.85px;font-family:'Liberation Sans',sans-serif;font-size:17px;font-weight:400;color:#444;transform:scaleX(1.0216);transform-origin:0 0;">Format Painter</div>
<div class="t" style="left:688.70px;top:63.55px;font-family:'Liberation Sans',sans-serif;font-size:17px;font-weight:400;color:#444;transform:scaleX(1.0188);transform-origin:0 0;">Wrap Text</div>
<div class="t" style="left:689.00px;top:107.25px;font-family:'Liberation Sans',sans-serif;font-size:17px;font-weight:400;color:#444;transform:scaleX(1.0383);transform-origin:0 0;">Merge &amp; Center</div>
<div class="t" style="left:1035.00px;top:100.35px;font-family:'Liberation Sans',sans-serif;font-size:17px;font-weight:400;color:#444;transform:scaleX(1.0631);transform-origin:0 0;">Conditional</div>
<div class="t" style="left:1030.60px;top:124.35px;font-family:'Liberation Sans',sans-serif;font-size:17px;font-weight:400;color:#444;transform:scaleX(1.0634);transform-origin:0 0;">Formatting</div>
<div class="t" style="left:1135.60px;top:100.35px;font-family:'Liberation Sans',sans-serif;font-size:17px;font-weight:400;color:#444;transform:scaleX(1.0118);transform-origin:0 0;">Format as</div>
<div class="t" style="left:1149.20px;top:124.35px;font-family:'Liberation Sans',sans-serif;font-size:17px;font-weight:400;color:#444;transform:scaleX(0.9797);transform-origin:0 0;">Table</div>
<div class="t" style="left:1234.00px;top:100.35px;font-family:'Liberation Sans',sans-serif;font-size:17px;font-weight:400;color:#444;transform:scaleX(0.9470);transform-origin:0 0;">Cell</div>
<div class="t" style="left:1219.30px;top:124.35px;font-family:'Liberation Sans',sans-serif;font-size:17px;font-weight:400;color:#444;transform:scaleX(0.9384);transform-origin:0 0;">Styles</div>
<div class="t" style="left:1295.50px;top:100.35px;font-family:'Liberation Sans',sans-serif;font-size:17px;font-weight:400;color:#444;transform:scaleX(1.0094);transform-origin:0 0;">Insert</div>
<div class="t" style="left:1350.60px;top:100.35px;font-family:'Liberation Sans',sans-serif;font-size:17px;font-weight:400;color:#444;">Delete</div>
<div class="t" style="left:1406.60px;top:100.35px;font-family:'Liberation Sans',sans-serif;font-size:17px;font-weight:400;color:#444;transform:scaleX(1.0432);transform-origin:0 0;">Format</div>
<div class="t" style="left:1505.40px;top:50.65px;font-family:'Liberation Sans',sans-serif;font-size:17px;font-weight:400;color:#444;transform:scaleX(1.0476);transform-origin:0 0;">AutoSum</div>
<div class="t" style="left:1505.40px;top:81.45px;font-family:'Liberation Sans',sans-serif;font-size:17px;font-weight:400;color:#444;transform:scaleX(0.9471);transform-origin:0 0;">Fill</div>
<div class="t" style="left:1505.40px;top:112.95px;font-family:'Liberation Sans',sans-serif;font-size:17px;font-weight:400;color:#444;transform:scaleX(0.9502);transform-origin:0 0;">Clear</div>
<div class="t" style="left:1605.60px;top:100.35px;font-family:'Liberation Sans',sans-serif;font-size:17px;font-weight:400;color:#444;transform:scaleX(1.0836);transform-origin:0 0;">Sort &amp;</div>
<div class="t" style="left:1606.90px;top:124.35px;font-family:'Liberation Sans',sans-serif;font-size:17px;font-weight:400;color:#444;transform:scaleX(0.9748);transform-origin:0 0;">Filter</div>
<div class="t" style="left:1665.60px;top:100.35px;font-family:'Liberation Sans',sans-serif;font-size:17px;font-weight:400;color:#444;transform:scaleX(1.0646);transform-origin:0 0;">Find &amp;</div>
<div class="t" style="left:1662.40px;top:124.35px;font-family:'Liberation Sans',sans-serif;font-size:17px;font-weight:400;color:#444;transform:scaleX(0.9757);transform-origin:0 0;">Select</div>
<svg style="position:absolute;left:28px;top:129px;" width="9" height="5" viewBox="0 0 9 5"><path d="M1 1 L8 1 L4.5 4.5 Z" fill="#666"/></svg>
<svg style="position:absolute;left:143px;top:91px;" width="9" height="5" viewBox="0 0 9 5"><path d="M1 1 L8 1 L4.5 4.5 Z" fill="#666"/></svg>
<svg style="position:absolute;left:345px;top:67px;" width="9" height="5" viewBox="0 0 9 5"><path d="M1 1 L8 1 L4.5 4.5 Z" fill="#666"/></svg>
<svg style="position:absolute;left:406px;top:67px;" width="9" height="5" viewBox="0 0 9 5"><path d="M1 1 L8 1 L4.5 4.5 Z" fill="#666"/></svg>
<svg style="position:absolute;left:315px;top:112px;" width="9" height="5" viewBox="0 0 9 5"><path d="M1 1 L8 1 L4.5 4.5 Z" fill="#666"/></svg>
<svg style="position:absolute;left:369px;top:112px;" width="9" height="5" viewBox="0 0 9 5"><path d="M1 1 L8 1 L4.5 4.5 Z" fill="#666"/></svg>
<svg style="position:absolute;left:423px;top:112px;" width="9" height="5" viewBox="0 0 9 5"><path d="M1 1 L8 1 L4.5 4.5 Z" fill="#666"/></svg>
<svg style="position:absolute;left:467px;top:112px;" width="9" height="5" viewBox="0 0 9 5"><path d="M1 1 L8 1 L4.5 4.5 Z" fill="#666"/></svg>
<svg style="position:absolute;left:618px;top:68px;" width="9" height="5" viewBox="0 0 9 5"><path d="M1 1 L8 1 L4.5 4.5 Z" fill="#666"/></svg>
<svg style="position:absolute;left:823px;top:113px;" width="9" height="5" viewBox="0 0 9 5"><path d="M1 1 L8 1 L4.5 4.5 Z" fill="#666"/></svg>
<svg style="position:absolute;left:1006px;top:68px;" width="9" height="5" viewBox="0 0 9 5"><path d="M1 1 L8 1 L4.5 4.5 Z" fill="#666"/></svg>
<svg style="position:absolute;left:877px;top:112px;" width="9" height="5" viewBox="0 0 9 5"><path d="M1 1 L8 1 L4.5 4.5 Z" fill="#666"/></svg>
<svg style="position:absolute;left:1123px;top:129px;" width="9" height="5" viewBox="0 0 9 5"><path d="M1 1 L8 1 L4.5 4.5 Z" fill="#666"/></svg>
<svg style="position:absolute;left:1194px;top:129px;" width="9" height="5" viewBox="0 0 9 5"><path d="M1 1 L8 1 L4.5 4.5 Z" fill="#666"/></svg>
<svg style="position:absolute;left:1268px;top:129px;" width="9" height="5" viewBox="0 0 9 5"><path d="M1 1 L8 1 L4.5 4.5 Z" fill="#666"/></svg>
<svg style="position:absolute;left:1312px;top:129px;" width="9" height="5" viewBox="0 0 9 5"><path d="M1 1 L8 1 L4.5 4.5 Z" fill="#666"/></svg>
<svg style="position:absolute;left:1370px;top:129px;" width="9" height="5" viewBox="0 0 9 5"><path d="M1 1 L8 1 L4.5 4.5 Z" fill="#666"/></svg>
<svg style="position:absolute;left:1430px;top:129px;" width="9" height="5" viewBox="0 0 9 5"><path d="M1 1 L8 1 L4.5 4.5 Z" fill="#666"/></svg>
<svg style="position:absolute;left:1589px;top:56px;" width="9" height="5" viewBox="0 0 9 5"><path d="M1 1 L8 1 L4.5 4.5 Z" fill="#666"/></svg>
<svg style="position:absolute;left:1530px;top:86px;" width="9" height="5" viewBox="0 0 9 5"><path d="M1 1 L8 1 L4.5 4.5 Z" fill="#666"/></svg>
<svg style="position:absolute;left:1548px;top:117px;" width="9" height="5" viewBox="0 0 9 5"><path d="M1 1 L8 1 L4.5 4.5 Z" fill="#666"/></svg>
<svg style="position:absolute;left:1648px;top:129px;" width="9" height="5" viewBox="0 0 9 5"><path d="M1 1 L8 1 L4.5 4.5 Z" fill="#666"/></svg>
<svg style="position:absolute;left:1712px;top:129px;" width="9" height="5" viewBox="0 0 9 5"><path d="M1 1 L8 1 L4.5 4.5 Z" fill="#666"/></svg>
<div style="left:223px;top:56px;width:135px;height:31px;box-sizing:border-box;border:1px solid #C6C6C6;background:#fff;"></div>
<div style="left:357px;top:56px;width:62px;height:31px;box-sizing:border-box;border:1px solid #C6C6C6;background:#fff;"></div>
<div class="t" style="left:226.30px;top:64.25px;font-family:'Liberation Sans',sans-serif;font-size:17px;font-weight:400;color:#262626;transform:scaleX(1.0118);transform-origin:0 0;">Arial</div>
<div class="t" style="left:362.70px;top:64.25px;font-family:'Liberation Sans',sans-serif;font-size:17px;font-weight:400;color:#262626;transform:scaleX(0.9272);transform-origin:0 0;">10</div>
<div style="left:845px;top:56px;width:174px;height:31px;box-sizing:border-box;border:1px solid #C6C6C6;background:#fff;"></div>
<div class="t" style="left:848.50px;top:64.45px;font-family:'Liberation Sans',sans-serif;font-size:17px;font-weight:400;color:#262626;transform:scaleX(0.9587);transform-origin:0 0;">General</div>
<svg style="position:absolute;left:345px;top:67px;" width="9" height="5" viewBox="0 0 9 5"><path d="M1 1 L8 1 L4.5 4.5 Z" fill="#666"/></svg>
<svg style="position:absolute;left:406px;top:67px;" width="9" height="5" viewBox="0 0 9 5"><path d="M1 1 L8 1 L4.5 4.5 Z" fill="#666"/></svg>
<svg style="position:absolute;left:1006px;top:68px;" width="9" height="5" viewBox="0 0 9 5"><path d="M1 1 L8 1 L4.5 4.5 Z" fill="#666"/></svg>
<div style="left:5px;top:182px;width:102px;height:35px;box-sizing:border-box;border:1px solid #C6C6C6;background:#fff;"></div>
<div class="t" style="left:12.10px;top:192.25px;font-family:'Liberation Sans',sans-serif;font-size:17px;font-weight:400;color:#444;transform:scaleX(1.0479);transform-origin:0 0;">S30</div>
<svg style="position:absolute;left:87px;top:196px;" width="9" height="5" viewBox="0 0 9 5"><path d="M1 1 L8 1 L4.5 4.5 Z" fill="#666"/></svg>
<div style="left:121px;top:194px;width:2px;height:2px;background:#999;"></div>
<div style="left:121px;top:199px;width:2px;height:2px;background:#999;"></div>
<div style="left:121px;top:203px;width:2px;height:2px;background:#999;"></div>
<div style="left:137px;top:182px;width:110px;height:35px;box-sizing:border-box;border:1px solid #D4D4D4;background:#fff;"></div>
<svg style="position:absolute;left:145px;top:190px;" width="22" height="20" viewBox="0 0 22 20"><path d="M3 3 L18 17 M18 3 L3 17" stroke="#BDBDBD" stroke-width="2.2" fill="none"/></svg>
<svg style="position:absolute;left:178px;top:189px;" width="28" height="20" viewBox="0 0 28 20"><path d="M3 11 L10 17 L24 4" stroke="#C4C4C4" stroke-width="3" fill="none"/></svg>
<div class="t" style="left:217.20px;top:187.57px;font-family:'Liberation Serif',serif;font-size:21px;font-weight:700;font-style:italic;color:#555;transform:scaleX(1.0857);transform-origin:0 0;">fx</div>
<div style="left:250px;top:182px;width:1665px;height:35px;box-sizing:border-box;border:1px solid #C6C6C6;background:#fff;"></div>
<svg style="position:absolute;left:1895px;top:194px;" width="14" height="10" viewBox="0 0 14 10"><path d="M1.5 2 L7 7.5 L12.5 2" stroke="#666" stroke-width="2.5" fill="none"/></svg>
<svg style="position:absolute;left:14px;top:47px;" width="46" height="50" viewBox="0 0 46 50"><rect x="2.5" y="7" width="32" height="37" fill="#EAC27A"/><rect x="8" y="7" width="21" height="5" fill="#6E6E6E"/><rect x="14" y="2" width="9" height="6" rx="1" fill="#6E6E6E"/><circle cx="18.5" cy="5.5" r="1.6" fill="#fff"/><path d="M21 18.5 L35.5 18.5 L43 26 L43 47 L21 47 Z" fill="#fff" stroke="#fff" stroke-width="2"/><path d="M22.5 19.5 L35.5 19.5 L42.5 26.5 L42.5 46.5 L22.5 46.5 Z" fill="#fff" stroke="#666" stroke-width="1.2"/><path d="M35.5 19.5 L35.5 26.5 L42.5 26.5" fill="none" stroke="#666" stroke-width="1.2"/></svg>
<svg style="position:absolute;left:64px;top:48px;" width="24" height="24" viewBox="0 0 24 24"><path d="M6 1.5 L15.5 15 M17.5 1.5 L8 15" stroke="#555" stroke-width="1.8" fill="none"/><circle cx="6.3" cy="18.5" r="3.4" fill="none" stroke="#5A7896" stroke-width="1.7"/><circle cx="17.3" cy="18.5" r="3.4" fill="none" stroke="#5A7896" stroke-width="1.7"/></svg>
<svg style="position:absolute;left:65px;top:81px;" width="24" height="24" viewBox="0 0 24 24"><path d="M2.5 2.5 L10 2.5 L13 5.5 L13 15.5 L2.5 15.5 Z" fill="#fff" stroke="#555" stroke-width="1.1"/><path d="M4.5 6 H10 M4.5 9 H10 M4.5 12 H9" stroke="#6A8199" stroke-width="1"/><path d="M10.5 8.5 L17.5 8.5 L20.5 11.5 L20.5 21.5 L10.5 21.5 Z" fill="#fff" stroke="#555" stroke-width="1.1"/><path d="M12.5 12.5 H18.5 M12.5 15.5 H18.5 M12.5 18.5 H18.5" stroke="#6A8199" stroke-width="1"/></svg>
<svg style="position:absolute;left:65px;top:115px;" width="24" height="22" viewBox="0 0 24 22"><path d="M3 15 L10 8 L15 13 L8 20 Q5 19 3 15 Z" fill="#E5BE78"/><path d="M11 7 L15 3 L20 8 L16 12 Z" fill="#666"/><path d="M16 2.5 L18.5 0 L22 3.5 L19.5 6 Z" fill="#666"/></svg>
<div class="t" style="left:231.80px;top:104.85px;font-family:'Liberation Sans',sans-serif;font-size:19px;font-weight:700;color:#444;transform:scaleX(0.7564);transform-origin:0 0;">B</div>
<div class="t" style="left:262.29px;top:104.81px;font-family:'Liberation Serif',serif;font-size:19.5px;font-weight:700;font-style:italic;color:#444;transform:scaleX(1.1765);transform-origin:0 0;">I</div>
<div class="t" style="left:291.80px;top:104.78px;font-family:'Liberation Sans',sans-serif;font-size:18.5px;font-weight:700;color:#444;transform:scaleX(0.8673);transform-origin:0 0;">U</div>
<div style="left:291px;top:122px;width:13px;height:1.6px;background:#444;"></div>
<div style="left:331px;top:104px;width:1px;height:24px;background:#E1E1E1;"></div>
<svg style="position:absolute;left:339px;top:101px;" width="25" height="25" viewBox="0 0 25 25"><path d="M2.5 2.5 H22.5 V22.5 M2.5 2.5 V22.5 M12.5 2.5 V22.5 M2.5 12.5 H22.5" stroke="#555" stroke-width="1.2" stroke-dasharray="1.2 1.8" fill="none"/><path d="M2 22.5 H23" stroke="#555" stroke-width="1.5"/></svg>
<div style="left:385px;top:104px;width:1px;height:24px;background:#E1E1E1;"></div>
<svg style="position:absolute;left:393px;top:100px;" width="27" height="27" viewBox="0 0 27 27"><rect x="10" y="2" width="4.5" height="7.5" fill="none" stroke="#555" stroke-width="1.2"/><circle cx="14" cy="9.5" r="1.1" fill="#555"/><path d="M6.5 11 L13 4.5 L21 12.5 L14.5 19 Z" fill="#fff" stroke="#555" stroke-width="1.3"/><path d="M20.5 9.5 Q24.5 13 21.5 19" stroke="#3E6FA8" stroke-width="2.4" fill="none"/><rect x="1" y="20" width="24" height="5.5" fill="#FFFF00"/></svg>
<div class="t" style="left:442.20px;top:99.95px;font-family:'Liberation Sans',sans-serif;font-size:23px;font-weight:400;color:#555;transform:scaleX(0.9366);transform-origin:0 0;">A</div>
<div style="left:438px;top:120px;width:24px;height:5.5px;background:#E81123;"></div>
<div class="t" style="left:428.00px;top:65.05px;font-family:'Liberation Sans',sans-serif;font-size:17px;font-weight:400;color:#444;transform:scaleX(0.9934);transform-origin:0 0;">A</div>
<svg style="position:absolute;left:438px;top:58px;" width="8" height="6" viewBox="0 0 8 6"><path d="M1 5 L4 1.5 L7 5 Z" fill="#555"/></svg>
<div class="t" style="left:459.70px;top:67.17px;font-family:'Liberation Sans',sans-serif;font-size:14.5px;font-weight:400;color:#444;transform:scaleX(0.9333);transform-origin:0 0;">A</div>
<svg style="position:absolute;left:466px;top:58px;" width="8" height="6" viewBox="0 0 8 6"><path d="M1 1.5 L4 5 L7 1.5 Z" fill="#555"/></svg>
<svg style="position:absolute;left:494px;top:57px;" width="20" height="14" viewBox="0 0 20 14"><rect x="0" y="2" width="18" height="1.3" fill="#555"/><rect x="2" y="5" width="14" height="1.3" fill="#555"/><rect x="0" y="8" width="18" height="1.3" fill="#555"/><rect x="2" y="11" width="14" height="1.3" fill="#555"/></svg>
<svg style="position:absolute;left:524px;top:63px;" width="20" height="14" viewBox="0 0 20 14"><rect x="0" y="2" width="18" height="1.3" fill="#555"/><rect x="2" y="5" width="14" height="1.3" fill="#555"/><rect x="0" y="8" width="18" height="1.3" fill="#555"/><rect x="2" y="11" width="14" height="1.3" fill="#555"/></svg>
<div style="left:548px;top:55px;width:30px;height:31px;background:#A0D4B4;"></div>
<svg style="position:absolute;left:554px;top:69px;" width="20" height="14" viewBox="0 0 20 14"><rect x="0" y="2" width="18" height="1.3" fill="#46735A"/><rect x="2" y="5" width="14" height="1.3" fill="#46735A"/><rect x="0" y="8" width="18" height="1.3" fill="#46735A"/><rect x="2" y="11" width="14" height="1.3" fill="#46735A"/></svg>
<div style="left:582px;top:59px;width:1px;height:23px;background:#E1E1E1;"></div>
<svg style="position:absolute;left:590px;top:58px;" width="28" height="24" viewBox="0 0 28 24"><text x="0" y="0" font-family="Liberation Sans" font-size="14.5" fill="#4a4a4a" stroke="#4a4a4a" stroke-width="0.3" transform="translate(8,20) rotate(-45)">ab</text><path d="M11.5 21 L21 11.5" stroke="#555" stroke-width="1.4" fill="none"/><path d="M23.5 9 L17.5 10.5 L22 15 Z" fill="#555"/></svg>
<svg style="position:absolute;left:494px;top:106px;" width="18" height="18" viewBox="0 0 18 18"><rect x="1" y="1" width="14" height="1.3" fill="#555"/><rect x="1" y="4" width="10" height="1.3" fill="#555"/><rect x="1" y="7" width="14" height="1.3" fill="#555"/><rect x="1" y="10" width="10" height="1.3" fill="#555"/><rect x="1" y="13" width="14" height="1.3" fill="#555"/><rect x="1" y="16" width="10" height="1.3" fill="#555"/></svg>
<svg style="position:absolute;left:523px;top:106px;" width="20" height="18" viewBox="0 0 20 18"><rect x="1" y="1" width="18" height="1.3" fill="#555"/><rect x="4" y="4" width="12" height="1.3" fill="#555"/><rect x="1" y="7" width="18" height="1.3" fill="#555"/><rect x="4" y="10" width="12" height="1.3" fill="#555"/><rect x="1" y="13" width="18" height="1.3" fill="#555"/><rect x="4" y="16" width="12" height="1.3" fill="#555"/></svg>
<svg style="position:absolute;left:555px;top:106px;" width="18" height="18" viewBox="0 0 18 18"><rect x="1" y="1" width="14" height="1.3" fill="#555"/><rect x="5" y="4" width="10" height="1.3" fill="#555"/><rect x="1" y="7" width="14" height="1.3" fill="#555"/><rect x="5" y="10" width="10" height="1.3" fill="#555"/><rect x="1" y="13" width="14" height="1.3" fill="#555"/><rect x="5" y="16" width="10" height="1.3" fill="#555"/></svg>
<div style="left:582px;top:104px;width:1px;height:24px;background:#E1E1E1;"></div>
<svg style="position:absolute;left:592px;top:105px;" width="24" height="18" viewBox="0 0 24 18"><rect x="2" y="2.5" width="19" height="1.3" fill="#555"/><rect x="10" y="5.5" width="11" height="1.3" fill="#555"/><rect x="10" y="8.5" width="11" height="1.3" fill="#555"/><rect x="10" y="11.5" width="11" height="1.3" fill="#555"/><rect x="2" y="14.5" width="19" height="1.3" fill="#555"/><path d="M1 9 L6 4.5 L6 7.5 L9.5 7.5 L9.5 10.5 L6 10.5 L6 13.5 Z" fill="#3E6FA8"/></svg>
<svg style="position:absolute;left:622px;top:105px;" width="24" height="18" viewBox="0 0 24 18"><rect x="2" y="2.5" width="19" height="1.3" fill="#555"/><rect x="10" y="5.5" width="11" height="1.3" fill="#555"/><rect x="10" y="8.5" width="11" height="1.3" fill="#555"/><rect x="10" y="11.5" width="11" height="1.3" fill="#555"/><rect x="2" y="14.5" width="19" height="1.3" fill="#555"/><path d="M9.5 9 L4.5 4.5 L4.5 7.5 L1 7.5 L1 10.5 L4.5 10.5 L4.5 13.5 Z" fill="#3E6FA8"/></svg>
<div style="left:653px;top:58px;width:1px;height:71px;background:#E1E1E1;"></div>
<svg style="position:absolute;left:660px;top:58px;" width="28" height="26" viewBox="0 0 28 26"><rect x="2.5" y="2.5" width="14" height="7" fill="#fff" stroke="#555" stroke-width="1.1"/><rect x="2.5" y="12" width="14" height="11.5" fill="#fff" stroke="#555" stroke-width="1.1"/><path d="M4.5 5.5 H22" stroke="#555" stroke-width="1.1"/><path d="M4.5 16.5 H14 M4.5 19.5 H14" stroke="#555" stroke-width="1.1"/><path d="M24 7 Q25 13 17.5 13.5" stroke="#3E6FA8" stroke-width="1.8" fill="none"/><path d="M15.5 13.5 L19.5 10 L19.5 17 Z" fill="#3E6FA8"/></svg>
<svg style="position:absolute;left:659px;top:101px;" width="28" height="28" viewBox="0 0 28 28"><rect x="2.5" y="2.5" width="22" height="22" fill="#EEF3F9" stroke="#555" stroke-width="1.1"/><path d="M2.5 7.5 H24.5 M2.5 19.5 H24.5 M13.5 2.5 V7.5 M13.5 19.5 V24.5" stroke="#555" stroke-width="1.1"/><path d="M6 13.5 H21" stroke="#3E6FA8" stroke-width="1.3"/><path d="M5 13.5 L9 10.5 L9 16.5 Z M22 13.5 L18 10.5 L18 16.5 Z" fill="#3E6FA8"/></svg>
<div class="t" style="left:854.50px;top:102.30px;font-family:'Liberation Sans',sans-serif;font-size:22px;font-weight:400;color:#444;transform:scaleX(0.8163);transform-origin:0 0;">$</div>
<div class="t" style="left:894.80px;top:104.15px;font-family:'Liberation Sans',sans-serif;font-size:21px;font-weight:400;color:#444;transform:scaleX(0.9664);transform-origin:0 0;">%</div>
<div class="t" style="left:930.00px;top:95.60px;font-family:'Liberation Sans',sans-serif;font-size:24px;font-weight:700;color:#444;transform:scaleX(0.9057);transform-origin:0 0;">,</div>
<div style="left:953px;top:104px;width:1px;height:23px;background:#E1E1E1;"></div>
<div class="t" style="left:973.00px;top:103.30px;font-family:'Liberation Sans',sans-serif;font-size:12px;font-weight:400;color:#444;">.0</div>
<div class="t" style="left:966.00px;top:112.80px;font-family:'Liberation Sans',sans-serif;font-size:12px;font-weight:400;color:#444;">.00</div>
<svg style="position:absolute;left:964px;top:106px;" width="9" height="8" viewBox="0 0 9 8"><path d="M1 4 L4.5 1 V3 H8 V5 H4.5 V7 Z" fill="#3E6FA8"/></svg>
<div class="t" style="left:995.00px;top:103.30px;font-family:'Liberation Sans',sans-serif;font-size:12px;font-weight:400;color:#444;">.00</div>
<div class="t" style="left:1003.00px;top:112.80px;font-family:'Liberation Sans',sans-serif;font-size:12px;font-weight:400;color:#444;">.0</div>
<svg style="position:absolute;left:993px;top:116px;" width="10" height="8" viewBox="0 0 10 8"><path d="M9 4 L5.5 1 V3 H1.5 V5 H5.5 V7 Z" fill="#3E6FA8"/></svg>
<svg style="position:absolute;left:1058px;top:47px;" width="48" height="48" viewBox="0 0 48 48"><rect x="15" y="2.5" width="8" height="7.5" fill="#D24726"/><rect x="15" y="10.5" width="13.5" height="7.5" fill="#3E78B5"/><rect x="15" y="18.5" width="10.5" height="7.5" fill="#D24726"/><rect x="15" y="26.5" width="5" height="8" fill="#3E78B5"/><path d="M2.5 2.5 H41.5 V26.5 M2.5 2.5 V34.5 H26 M2.5 10.5 H41.5 M2.5 18.5 H41.5 M2.5 26.5 H41.5 M29.5 2.5 V26.5" stroke="#444" stroke-width="1.1" fill="none"/><rect x="25.5" y="29.5" width="20" height="16" fill="#fff" stroke="#444" stroke-width="1.1"/><path d="M30 35 H41 M30 39.5 H41 M38 32 L33 43" stroke="#333" stroke-width="1.3"/></svg>
<svg style="position:absolute;left:1153px;top:50px;" width="50" height="46" viewBox="0 0 50 46"><rect x="12" y="10" width="30" height="24" fill="#B8CCE4"/><path d="M2.5 2.5 H42.5 V34.5 H2.5 Z M12.5 2.5 V34.5 M22.5 2.5 V34.5 M32.5 2.5 V34.5 M2.5 10.5 H42.5 M2.5 18.5 H42.5 M2.5 26.5 H42.5" stroke="#444" stroke-width="1.1" fill="none"/><path d="M27 34 L44 14 L47 17 L47 26 L33 40 Z" fill="#fff"/><path d="M33 31 L45.5 12 L45.5 22 L36 34 Z" fill="#666"/><path d="M12 44 Q19 33 27 33 Q32 35 31 39 Q24 45 12 44 Z" fill="#3E78B5" stroke="#fff" stroke-width="1"/><path d="M26 31 Q33 32 32 38" stroke="#555" stroke-width="1.1" fill="none"/></svg>
<svg style="position:absolute;left:1225px;top:47px;" width="48" height="46" viewBox="0 0 48 46"><rect x="9.5" y="9.5" width="26" height="18" fill="#B8CCE4"/><path d="M2.5 2.5 H42.5 V20 M2.5 2.5 V34.5 H24 M9.5 2.5 V34.5 M35.5 2.5 V27.5 M2.5 9.5 H42.5 M2.5 27.5 H35.5" stroke="#444" stroke-width="1.1" fill="none"/><path d="M26 34 L45 12 L47 14 L47 24 L33 39 Z" fill="#fff"/><path d="M33 30 L45.5 11 L45.5 22 L36 33 Z" fill="#666"/><path d="M12 44 Q19 33 27 33 Q32 35 31 39 Q24 45 12 44 Z" fill="#3E78B5" stroke="#fff" stroke-width="1"/><path d="M26 31 Q33 32 32 38" stroke="#555" stroke-width="1.1" fill="none"/></svg>
<svg style="position:absolute;left:1293px;top:47px;" width="48" height="48" viewBox="0 0 48 48"><rect x="5.5" y="2.5" width="22" height="8" fill="#fff" stroke="#444" stroke-width="1.1"/><path d="M16.5 2.5 V10.5" stroke="#444" stroke-width="1.1"/><rect x="22.5" y="15.5" width="22" height="8" fill="#B8CCE4" stroke="#444" stroke-width="1.1"/><path d="M33.5 15.5 V23.5" stroke="#444" stroke-width="1.1"/><path d="M3 19.5 H17" stroke="#3E78B5" stroke-width="3"/><path d="M2 19.5 L9 13.5 M2 19.5 L9 25.5" stroke="#3E78B5" stroke-width="2.6" fill="none"/><rect x="5.5" y="28.5" width="22" height="16" fill="#fff" stroke="#444" stroke-width="1.1"/><path d="M16.5 28.5 V44.5 M5.5 36.5 H27.5" stroke="#444" stroke-width="1.1"/></svg>
<svg style="position:absolute;left:1354px;top:47px;" width="48" height="48" viewBox="0 0 48 48"><rect x="2.5" y="2.5" width="22" height="8" fill="#fff" stroke="#444" stroke-width="1.1"/><path d="M13.5 2.5 V10.5" stroke="#444" stroke-width="1.1"/><rect x="10.5" y="15.5" width="16" height="8" fill="#B8CCE4" stroke="#444" stroke-width="1.1"/><path d="M16.5 15.5 V23.5" stroke="#444" stroke-width="1.1"/><rect x="2.5" y="28.5" width="22" height="16" fill="#fff" stroke="#444" stroke-width="1.1"/><path d="M13.5 28.5 V44.5 M2.5 36.5 H24.5" stroke="#444" stroke-width="1.1"/><path d="M23.5 12.5 L42.5 29.5 M42.5 13.5 L23 29.5" stroke="#D24726" stroke-width="2.8" stroke-linecap="round"/></svg>
<svg style="position:absolute;left:1412px;top:45px;" width="46" height="50" viewBox="0 0 46 50"><path d="M2.5 3 V10.5 M36 3 V10.5" stroke="#444" stroke-width="1.1"/><path d="M6 7 H32" stroke="#3E78B5" stroke-width="2.4"/><path d="M5 7 L11 2.5 M5 7 L11 11.5 M33 7 L27 2.5 M33 7 L27 11.5" stroke="#3E78B5" stroke-width="2.2" fill="none"/><rect x="13" y="21" width="11" height="14" fill="#3E78B5"/><path d="M2.5 13.5 H42.5 V42.5 H2.5 Z M12.5 13.5 V42.5 M24.5 13.5 V42.5 M35.5 13.5 V42.5 M2.5 20.5 H42.5 M2.5 35.5 H42.5" stroke="#444" stroke-width="1.1" fill="none"/><path d="M2.5 42.5 V47.5 H13 L16 44 M18 43 L16 47.5 H28 L31 43" stroke="#444" stroke-width="1.1" fill="none"/></svg>
<svg style="position:absolute;left:1478px;top:46px;" width="22" height="23" viewBox="0 0 22 23"><path d="M19 5 V2.5 H3.5 L11.5 11.5 L3.5 20.5 H19 V18" stroke="#444" stroke-width="2.2" fill="none"/></svg>
<svg style="position:absolute;left:1477px;top:75px;" width="25" height="26" viewBox="0 0 25 26"><rect x="2.5" y="2.5" width="20" height="21.5" fill="#fff" stroke="#555" stroke-width="1.1"/><rect x="2" y="2" width="21" height="3.5" fill="#777"/><path d="M12.5 8 V20" stroke="#3E78B5" stroke-width="2.6"/><path d="M7 15 L12.5 21 L18 15" stroke="#3E78B5" stroke-width="2.6" fill="none"/></svg>
<svg style="position:absolute;left:1478px;top:108px;" width="25" height="23" viewBox="0 0 25 23"><path d="M3 16 L13 5 Q15.5 3 18 5 L19.5 6.5 Q21 9 19 11 L9 21.5 Q7 23 5 21 L3.5 19.5 Q1.5 17.5 3 16 Z" fill="#E26F85"/><path d="M6 12.5 L12.5 18.5" stroke="#fff" stroke-width="1.3"/><path d="M8.5 21.5 H22.5" stroke="#555" stroke-width="1.1"/></svg>
<div class="t" style="left:1610.00px;top:46.90px;font-family:'Liberation Sans',sans-serif;font-size:22px;font-weight:400;color:#3E6FA8;transform:scaleX(1.0576);transform-origin:0 0;">A</div>
<div class="t" style="left:1611.00px;top:69.15px;font-family:'Liberation Sans',sans-serif;font-size:21px;font-weight:400;color:#8064A2;transform:scaleX(1.0097);transform-origin:0 0;">Z</div>
<svg style="position:absolute;left:1627px;top:57px;" width="28" height="26" viewBox="0 0 28 26"><path d="M2.5 2.5 H24.5 L16 12.5 V23.5 H11 V12.5 Z" fill="#777"/><path d="M5.5 3.5 L12 11.5 V22.5" stroke="#fff" stroke-width="1.1" fill="none"/></svg>
<svg style="position:absolute;left:1668px;top:47px;" width="46" height="43" viewBox="0 0 46 43"><path d="M11 2 H18.5 V8 H21.5 V16.5 H25 V8 H28 V2 H35.5 V8 H38.5 V16 H41 V23.5 H44 V41 H26 V25.5 H20.5 V41 H2 V23.5 H5 V16 H8 V8 H11 Z" fill="#6D6D6D"/><path d="M13 3.5 V8 M10 10 V16 M7 18 V23 M4 26 V39.5 M33.5 3.5 V8 M36.5 10 V16 M39.5 18 V23 M42.5 26 V39.5" stroke="#fff" stroke-width="1.3"/><path d="M20 19 H26" stroke="#fff" stroke-width="1.6"/></svg>
<svg style="position:absolute;left:1893px;top:152px;" width="17" height="12" viewBox="0 0 17 12"><path d="M2 9 L8.5 3 L15 9" stroke="#444" stroke-width="2" fill="none"/></svg>
<div style="left:1889px;top:240px;width:1px;height:684px;background:#ABABAB;"></div>
<div style="left:1890px;top:227px;width:30px;height:698px;background:#fff;"></div>
<div style="left:1890px;top:253px;width:30px;height:648px;background:#F0F0F0;"></div>
<div style="left:1892px;top:228px;width:25px;height:25px;box-sizing:border-box;border:1px solid #C6C6C6;background:#fff;"></div>
<svg style="position:absolute;left:1899px;top:236px;" width="12" height="8" viewBox="0 0 12 8"><path d="M0.5 7 L5.5 1 L10.5 7 Z" fill="#666"/></svg>
<div style="left:1893px;top:281px;width:24px;height:40px;box-sizing:border-box;border:1px solid #C6C6C6;background:#fff;"></div>
<div style="left:1892px;top:901px;width:25px;height:24px;box-sizing:border-box;border:1px solid #C6C6C6;background:#fff;"></div>
<svg style="position:absolute;left:1899px;top:909px;" width="12" height="8" viewBox="0 0 12 8"><path d="M0.5 1 L5.5 7 L10.5 1 Z" fill="#666"/></svg>
<div style="left:0px;top:924px;width:1920px;height:27px;background:#F0F0F0;"></div>
<div style="left:0px;top:924px;width:1891px;height:1px;background:#C6C6C6;"></div>
<svg style="position:absolute;left:27px;top:932px;" width="10" height="14" viewBox="0 0 10 14"><path d="M8 1 L1.5 6.5 L8 12 Z" fill="#C6C6C6"/></svg>
<svg style="position:absolute;left:62px;top:932px;" width="10" height="14" viewBox="0 0 10 14"><path d="M2 1 L8.5 6.5 L2 12 Z" fill="#217346"/></svg>
<div style="left:118px;top:928px;width:1px;height:23px;background:#C6C6C6;"></div>
<div style="left:260px;top:928px;width:1px;height:23px;background:#C6C6C6;"></div>
<div style="left:347px;top:928px;width:1px;height:23px;background:#C6C6C6;"></div>
<div style="left:448px;top:928px;width:1px;height:23px;background:#C6C6C6;"></div>
<div style="left:520px;top:928px;width:1px;height:23px;background:#C6C6C6;"></div>
<div style="left:647px;top:928px;width:1px;height:23px;background:#C6C6C6;"></div>
<div style="left:762px;top:928px;width:1px;height:23px;background:#C6C6C6;"></div>
<div style="left:921px;top:928px;width:1px;height:23px;background:#C6C6C6;"></div>
<div style="left:1085px;top:928px;width:1px;height:23px;background:#C6C6C6;"></div>
<div style="left:1654px;top:928px;width:1px;height:23px;background:#C6C6C6;"></div>
<div class="t" style="left:134.90px;top:929.35px;font-family:'Liberation Sans',sans-serif;font-size:19px;font-weight:400;color:#444;transform:scaleX(1.0831);transform-origin:0 0;">Introduction</div>
<div class="t" style="left:273.00px;top:929.35px;font-family:'Liberation Sans',sans-serif;font-size:19px;font-weight:400;color:#444;transform:scaleX(1.0536);transform-origin:0 0;">Set-up</div>
<div class="t" style="left:360.00px;top:929.35px;font-family:'Liberation Sans',sans-serif;font-size:19px;font-weight:400;color:#444;transform:scaleX(1.0765);transform-origin:0 0;">Start-up</div>
<div class="t" style="left:462.00px;top:929.35px;font-family:'Liberation Sans',sans-serif;font-size:19px;font-weight:400;color:#444;transform:scaleX(0.9263);transform-origin:0 0;">Sales</div>
<div class="t" style="left:535.30px;top:929.35px;font-family:'Liberation Sans',sans-serif;font-size:19px;font-weight:400;color:#444;transform:scaleX(1.0362);transform-origin:0 0;">Headcount</div>
<div class="t" style="left:663.00px;top:929.35px;font-family:'Liberation Sans',sans-serif;font-size:19px;font-weight:400;color:#444;transform:scaleX(1.0573);transform-origin:0 0;">Inventory</div>
<div class="t" style="left:779.30px;top:929.35px;font-family:'Liberation Sans',sans-serif;font-size:19px;font-weight:400;color:#444;transform:scaleX(1.0626);transform-origin:0 0;">Equity &amp; Debt</div>
<div class="t" style="left:937.80px;top:929.35px;font-family:'Liberation Sans',sans-serif;font-size:19px;font-weight:400;color:#444;transform:scaleX(1.0343);transform-origin:0 0;">Capital Budget</div>
<div class="t" style="left:1105.60px;top:929.35px;font-family:'Liberation Sans',sans-serif;font-size:19px;font-weight:400;color:#444;transform:scaleX(1.0430);transform-origin:0 0;">Amortization Schedule</div>
<div class="t" style="left:1551.40px;top:929.35px;font-family:'Liberation Sans',sans-serif;font-size:19px;font-weight:400;color:#444;transform:scaleX(0.9613);transform-origin:0 0;">Cash Flow</div>
<div style="left:1670px;top:924px;width:117px;height:27px;overflow:hidden;"><div class="t" style="position:absolute;left:7px;top:5.35px;font-family:'Liberation Sans',sans-serif;font-size:19px;color:#444;">Monthly Income</div></div>
<div class="t" style="left:1798.60px;top:929.85px;font-family:'Liberation Sans',sans-serif;font-size:19px;font-weight:400;color:#444;transform:scaleX(0.6299);transform-origin:0 0;">...</div>
<svg style="position:absolute;left:1825px;top:929px;" width="24" height="23" viewBox="0 0 24 23"><circle cx="12" cy="11.5" r="10" fill="none" stroke="#666" stroke-width="1.6"/><path d="M12 6 V17 M6.5 11.5 H17.5" stroke="#555" stroke-width="1.8"/></svg>
<div style="left:1868px;top:936px;width:2px;height:2px;background:#999;"></div>
<div style="left:1868px;top:940px;width:2px;height:2px;background:#999;"></div>
<div style="left:1868px;top:944px;width:2px;height:2px;background:#999;"></div>
<div style="left:1326px;top:924px;width:211px;height:27px;background:#fff;"></div>
<div style="left:1325px;top:924px;width:1px;height:27px;background:#C6C6C6;"></div>
<div style="left:1537px;top:924px;width:1px;height:27px;background:#C6C6C6;"></div>
<div class="t" style="left:1337.40px;top:929.05px;font-family:'Liberation Sans',sans-serif;font-size:19px;font-weight:700;color:#217346;transform:scaleX(1.0155);transform-origin:0 0;">Operating Expenses</div>
</body></html>
